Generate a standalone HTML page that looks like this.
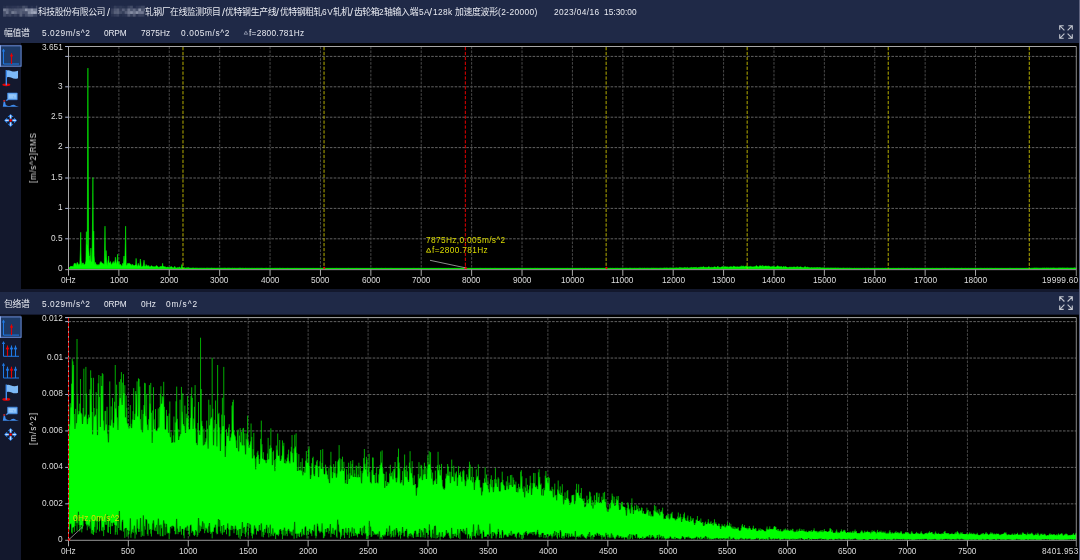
<!DOCTYPE html>
<html lang="zh"><head><meta charset="utf-8"><title>Spectrum</title>
<style>
html,body{margin:0;padding:0;background:#13182d;}
body{width:1080px;height:560px;position:relative;overflow:hidden;font-family:"Liberation Sans",sans-serif;}
.hdr{position:absolute;left:0;width:1078.7px;background:#1f2947;}
.cv{position:absolute;left:21.4px;width:1057.3px;background:#000;}
.t{position:absolute;white-space:pre;font-size:8.3px;line-height:10px;height:10px;will-change:transform;}
.c{position:absolute;overflow:visible;}
.cj{font-family:"Liberation Sans","Noto Sans CJK SC",sans-serif;color:#e9ebf2;font-size:8.9px;letter-spacing:-0.5px;}
#ov{position:absolute;left:0;top:0;}
</style></head><body>
<div class="hdr" style="top:0;height:43.1px"></div>
<div class="cv" style="top:43.3px;height:245.5px"></div>
<div class="hdr" style="top:292.2px;height:22px"></div>
<div class="cv" style="top:314.6px;height:245.4px"></div>
<div style="position:absolute;left:1078.7px;top:0;width:1.3px;height:560px;background:#5f6480"></div>
<svg id="ov" width="1080" height="560" viewBox="0 0 1080 560" fill="none">
<g filter="url(#bl)"><filter id="bl"><feGaussianBlur stdDeviation="0.55"/></filter><rect x="3.1" y="5.7" width="2.78" height="2.78" fill="#d5daea" opacity="0.04"/><rect x="3.1" y="8.43" width="2.78" height="2.78" fill="#d5daea" opacity="0.47"/><rect x="3.1" y="11.16" width="2.78" height="2.78" fill="#d5daea" opacity="0.23"/><rect x="3.1" y="13.89" width="2.78" height="2.78" fill="#d5daea" opacity="0.21"/><rect x="5.83" y="5.7" width="2.78" height="2.78" fill="#d5daea" opacity="0.08"/><rect x="5.83" y="8.43" width="2.78" height="2.78" fill="#d5daea" opacity="0.38"/><rect x="5.83" y="11.16" width="2.78" height="2.78" fill="#d5daea" opacity="0.43"/><rect x="5.83" y="13.89" width="2.78" height="2.78" fill="#d5daea" opacity="0.13"/><rect x="8.56" y="5.7" width="2.78" height="2.78" fill="#d5daea" opacity="0.05"/><rect x="8.56" y="8.43" width="2.78" height="2.78" fill="#d5daea" opacity="0.23"/><rect x="8.56" y="11.16" width="2.78" height="2.78" fill="#d5daea" opacity="0.19"/><rect x="8.56" y="13.89" width="2.78" height="2.78" fill="#d5daea" opacity="0.17"/><rect x="11.29" y="5.7" width="2.78" height="2.78" fill="#d5daea" opacity="0.07"/><rect x="11.29" y="8.43" width="2.78" height="2.78" fill="#d5daea" opacity="0.22"/><rect x="11.29" y="11.16" width="2.78" height="2.78" fill="#d5daea" opacity="0.47"/><rect x="11.29" y="13.89" width="2.78" height="2.78" fill="#d5daea" opacity="0.08"/><rect x="14.02" y="5.7" width="2.78" height="2.78" fill="#d5daea" opacity="0.07"/><rect x="14.02" y="8.43" width="2.78" height="2.78" fill="#d5daea" opacity="0.26"/><rect x="14.02" y="11.16" width="2.78" height="2.78" fill="#d5daea" opacity="0.38"/><rect x="14.02" y="13.89" width="2.78" height="2.78" fill="#d5daea" opacity="0.14"/><rect x="16.75" y="5.7" width="2.78" height="2.78" fill="#d5daea" opacity="0.1"/><rect x="16.75" y="8.43" width="2.78" height="2.78" fill="#d5daea" opacity="0.25"/><rect x="16.75" y="11.16" width="2.78" height="2.78" fill="#d5daea" opacity="0.26"/><rect x="16.75" y="13.89" width="2.78" height="2.78" fill="#d5daea" opacity="0.08"/><rect x="19.48" y="5.7" width="2.78" height="2.78" fill="#d5daea" opacity="0.08"/><rect x="19.48" y="8.43" width="2.78" height="2.78" fill="#d5daea" opacity="0.3"/><rect x="19.48" y="11.16" width="2.78" height="2.78" fill="#d5daea" opacity="0.31"/><rect x="19.48" y="13.89" width="2.78" height="2.78" fill="#d5daea" opacity="0.31"/><rect x="22.21" y="5.7" width="2.78" height="2.78" fill="#d5daea" opacity="0.22"/><rect x="22.21" y="8.43" width="2.78" height="2.78" fill="#d5daea" opacity="0.33"/><rect x="22.21" y="11.16" width="2.78" height="2.78" fill="#d5daea" opacity="0.24"/><rect x="22.21" y="13.89" width="2.78" height="2.78" fill="#d5daea" opacity="0.1"/><rect x="24.94" y="5.7" width="2.78" height="2.78" fill="#d5daea" opacity="0.16"/><rect x="24.94" y="8.43" width="2.78" height="2.78" fill="#d5daea" opacity="0.62"/><rect x="24.94" y="11.16" width="2.78" height="2.78" fill="#d5daea" opacity="0.24"/><rect x="24.94" y="13.89" width="2.78" height="2.78" fill="#d5daea" opacity="0.21"/><rect x="27.67" y="5.7" width="2.78" height="2.78" fill="#d5daea" opacity="0.02"/><rect x="27.67" y="8.43" width="2.78" height="2.78" fill="#d5daea" opacity="0.49"/><rect x="27.67" y="11.16" width="2.78" height="2.78" fill="#d5daea" opacity="0.55"/><rect x="27.67" y="13.89" width="2.78" height="2.78" fill="#d5daea" opacity="0.32"/><rect x="30.4" y="5.7" width="2.78" height="2.78" fill="#d5daea" opacity="0.06"/><rect x="30.4" y="8.43" width="2.78" height="2.78" fill="#d5daea" opacity="0.64"/><rect x="30.4" y="11.16" width="2.78" height="2.78" fill="#d5daea" opacity="0.67"/><rect x="30.4" y="13.89" width="2.78" height="2.78" fill="#d5daea" opacity="0.3"/><rect x="33.13" y="5.7" width="2.78" height="2.78" fill="#d5daea" opacity="0.02"/><rect x="33.13" y="8.43" width="2.78" height="2.78" fill="#d5daea" opacity="0.47"/><rect x="33.13" y="11.16" width="2.78" height="2.78" fill="#d5daea" opacity="0.73"/><rect x="33.13" y="13.89" width="2.78" height="2.78" fill="#d5daea" opacity="0.16"/><rect x="35.86" y="5.7" width="1.39" height="2.78" fill="#d5daea" opacity="0.19"/><rect x="35.86" y="8.43" width="1.39" height="2.78" fill="#d5daea" opacity="0.51"/><rect x="35.86" y="11.16" width="1.39" height="2.78" fill="#d5daea" opacity="0.62"/><rect x="35.86" y="13.89" width="1.39" height="2.78" fill="#d5daea" opacity="0.18"/><rect x="111" y="5.7" width="2.78" height="2.78" fill="#d5daea" opacity="0.02"/><rect x="111" y="8.43" width="2.78" height="2.78" fill="#d5daea" opacity="0.13"/><rect x="111" y="11.16" width="2.78" height="2.78" fill="#d5daea" opacity="0.14"/><rect x="111" y="13.89" width="2.78" height="2.78" fill="#d5daea" opacity="0.06"/><rect x="113.73" y="5.7" width="2.78" height="2.78" fill="#d5daea" opacity="0.11"/><rect x="113.73" y="8.43" width="2.78" height="2.78" fill="#d5daea" opacity="0.26"/><rect x="113.73" y="11.16" width="2.78" height="2.78" fill="#d5daea" opacity="0.31"/><rect x="113.73" y="13.89" width="2.78" height="2.78" fill="#d5daea" opacity="0.1"/><rect x="116.46" y="5.7" width="2.78" height="2.78" fill="#d5daea" opacity="0.07"/><rect x="116.46" y="8.43" width="2.78" height="2.78" fill="#d5daea" opacity="0.31"/><rect x="116.46" y="11.16" width="2.78" height="2.78" fill="#d5daea" opacity="0.33"/><rect x="116.46" y="13.89" width="2.78" height="2.78" fill="#d5daea" opacity="0.14"/><rect x="119.19" y="5.7" width="2.78" height="2.78" fill="#d5daea" opacity="0.09"/><rect x="119.19" y="8.43" width="2.78" height="2.78" fill="#d5daea" opacity="0.13"/><rect x="119.19" y="11.16" width="2.78" height="2.78" fill="#d5daea" opacity="0.2"/><rect x="119.19" y="13.89" width="2.78" height="2.78" fill="#d5daea" opacity="0.03"/><rect x="121.92" y="5.7" width="2.78" height="2.78" fill="#d5daea" opacity="0.06"/><rect x="121.92" y="8.43" width="2.78" height="2.78" fill="#d5daea" opacity="0.3"/><rect x="121.92" y="11.16" width="2.78" height="2.78" fill="#d5daea" opacity="0.12"/><rect x="121.92" y="13.89" width="2.78" height="2.78" fill="#d5daea" opacity="0.05"/><rect x="124.65" y="5.7" width="2.78" height="2.78" fill="#d5daea" opacity="0.04"/><rect x="124.65" y="8.43" width="2.78" height="2.78" fill="#d5daea" opacity="0.17"/><rect x="124.65" y="11.16" width="2.78" height="2.78" fill="#d5daea" opacity="0.3"/><rect x="124.65" y="13.89" width="2.78" height="2.78" fill="#d5daea" opacity="0.07"/><rect x="127.38" y="5.7" width="2.78" height="2.78" fill="#d5daea" opacity="0.13"/><rect x="127.38" y="8.43" width="2.78" height="2.78" fill="#d5daea" opacity="0.42"/><rect x="127.38" y="11.16" width="2.78" height="2.78" fill="#d5daea" opacity="0.46"/><rect x="127.38" y="13.89" width="2.78" height="2.78" fill="#d5daea" opacity="0.27"/><rect x="130.11" y="5.7" width="2.78" height="2.78" fill="#d5daea" opacity="0.19"/><rect x="130.11" y="8.43" width="2.78" height="2.78" fill="#d5daea" opacity="0.25"/><rect x="130.11" y="11.16" width="2.78" height="2.78" fill="#d5daea" opacity="0.57"/><rect x="130.11" y="13.89" width="2.78" height="2.78" fill="#d5daea" opacity="0.12"/><rect x="132.84" y="5.7" width="2.78" height="2.78" fill="#d5daea" opacity="0.02"/><rect x="132.84" y="8.43" width="2.78" height="2.78" fill="#d5daea" opacity="0.37"/><rect x="132.84" y="11.16" width="2.78" height="2.78" fill="#d5daea" opacity="0.42"/><rect x="132.84" y="13.89" width="2.78" height="2.78" fill="#d5daea" opacity="0.27"/><rect x="135.57" y="5.7" width="2.78" height="2.78" fill="#d5daea" opacity="0.07"/><rect x="135.57" y="8.43" width="2.78" height="2.78" fill="#d5daea" opacity="0.21"/><rect x="135.57" y="11.16" width="2.78" height="2.78" fill="#d5daea" opacity="0.58"/><rect x="135.57" y="13.89" width="2.78" height="2.78" fill="#d5daea" opacity="0.07"/><rect x="138.3" y="5.7" width="2.78" height="2.78" fill="#d5daea" opacity="0.1"/><rect x="138.3" y="8.43" width="2.78" height="2.78" fill="#d5daea" opacity="0.57"/><rect x="138.3" y="11.16" width="2.78" height="2.78" fill="#d5daea" opacity="0.43"/><rect x="138.3" y="13.89" width="2.78" height="2.78" fill="#d5daea" opacity="0.15"/><rect x="141.03" y="5.7" width="2.78" height="2.78" fill="#d5daea" opacity="0.16"/><rect x="141.03" y="8.43" width="2.78" height="2.78" fill="#d5daea" opacity="0.21"/><rect x="141.03" y="11.16" width="2.78" height="2.78" fill="#d5daea" opacity="0.45"/><rect x="141.03" y="13.89" width="2.78" height="2.78" fill="#d5daea" opacity="0.14"/><rect x="143.76" y="5.7" width="0.89" height="2.78" fill="#d5daea" opacity="0.2"/><rect x="143.76" y="8.43" width="0.89" height="2.78" fill="#d5daea" opacity="0.55"/><rect x="143.76" y="11.16" width="0.89" height="2.78" fill="#d5daea" opacity="0.22"/><rect x="143.76" y="13.89" width="0.89" height="2.78" fill="#d5daea" opacity="0.09"/></g>
<path d="M68.5 238.8H1076.3" stroke="#626262" stroke-dasharray="2.6 1.3"/>
<path d="M68.5 208.4H1076.3" stroke="#626262" stroke-dasharray="2.6 1.3"/>
<path d="M68.5 178H1076.3" stroke="#626262" stroke-dasharray="2.6 1.3"/>
<path d="M68.5 147.6H1076.3" stroke="#626262" stroke-dasharray="2.6 1.3"/>
<path d="M68.5 117.2H1076.3" stroke="#626262" stroke-dasharray="2.6 1.3"/>
<path d="M68.5 86.8H1076.3" stroke="#626262" stroke-dasharray="2.6 1.3"/>
<path d="M68.5 56.4H1076.3" stroke="#626262" stroke-dasharray="2.6 1.3"/>
<path d="M118.89 46.5V269.2" stroke="#484848" stroke-dasharray="2.6 1.3"/>
<path d="M169.28 46.5V269.2" stroke="#484848" stroke-dasharray="2.6 1.3"/>
<path d="M219.67 46.5V269.2" stroke="#484848" stroke-dasharray="2.6 1.3"/>
<path d="M270.06 46.5V269.2" stroke="#484848" stroke-dasharray="2.6 1.3"/>
<path d="M320.46 46.5V269.2" stroke="#484848" stroke-dasharray="2.6 1.3"/>
<path d="M370.85 46.5V269.2" stroke="#484848" stroke-dasharray="2.6 1.3"/>
<path d="M421.24 46.5V269.2" stroke="#484848" stroke-dasharray="2.6 1.3"/>
<path d="M471.63 46.5V269.2" stroke="#484848" stroke-dasharray="2.6 1.3"/>
<path d="M522.02 46.5V269.2" stroke="#484848" stroke-dasharray="2.6 1.3"/>
<path d="M572.41 46.5V269.2" stroke="#484848" stroke-dasharray="2.6 1.3"/>
<path d="M622.8 46.5V269.2" stroke="#484848" stroke-dasharray="2.6 1.3"/>
<path d="M673.19 46.5V269.2" stroke="#484848" stroke-dasharray="2.6 1.3"/>
<path d="M723.58 46.5V269.2" stroke="#484848" stroke-dasharray="2.6 1.3"/>
<path d="M773.97 46.5V269.2" stroke="#484848" stroke-dasharray="2.6 1.3"/>
<path d="M824.37 46.5V269.2" stroke="#484848" stroke-dasharray="2.6 1.3"/>
<path d="M874.76 46.5V269.2" stroke="#484848" stroke-dasharray="2.6 1.3"/>
<path d="M925.15 46.5V269.2" stroke="#484848" stroke-dasharray="2.6 1.3"/>
<path d="M975.54 46.5V269.2" stroke="#484848" stroke-dasharray="2.6 1.3"/>
<path d="M68.5 503.85H1076.3" stroke="#626262" stroke-dasharray="2.6 1.3"/>
<path d="M68.5 467.4H1076.3" stroke="#626262" stroke-dasharray="2.6 1.3"/>
<path d="M68.5 430.95H1076.3" stroke="#626262" stroke-dasharray="2.6 1.3"/>
<path d="M68.5 394.51H1076.3" stroke="#626262" stroke-dasharray="2.6 1.3"/>
<path d="M68.5 358.06H1076.3" stroke="#626262" stroke-dasharray="2.6 1.3"/>
<path d="M68.5 321.61H1076.3" stroke="#626262" stroke-dasharray="2.6 1.3"/>
<path d="M128.34 317.6V540.3" stroke="#484848" stroke-dasharray="2.6 1.3"/>
<path d="M188.27 317.6V540.3" stroke="#484848" stroke-dasharray="2.6 1.3"/>
<path d="M248.21 317.6V540.3" stroke="#484848" stroke-dasharray="2.6 1.3"/>
<path d="M308.14 317.6V540.3" stroke="#484848" stroke-dasharray="2.6 1.3"/>
<path d="M368.08 317.6V540.3" stroke="#484848" stroke-dasharray="2.6 1.3"/>
<path d="M428.01 317.6V540.3" stroke="#484848" stroke-dasharray="2.6 1.3"/>
<path d="M487.95 317.6V540.3" stroke="#484848" stroke-dasharray="2.6 1.3"/>
<path d="M547.88 317.6V540.3" stroke="#484848" stroke-dasharray="2.6 1.3"/>
<path d="M607.82 317.6V540.3" stroke="#484848" stroke-dasharray="2.6 1.3"/>
<path d="M667.75 317.6V540.3" stroke="#484848" stroke-dasharray="2.6 1.3"/>
<path d="M727.69 317.6V540.3" stroke="#484848" stroke-dasharray="2.6 1.3"/>
<path d="M787.63 317.6V540.3" stroke="#484848" stroke-dasharray="2.6 1.3"/>
<path d="M847.56 317.6V540.3" stroke="#484848" stroke-dasharray="2.6 1.3"/>
<path d="M907.5 317.6V540.3" stroke="#484848" stroke-dasharray="2.6 1.3"/>
<path d="M967.43 317.6V540.3" stroke="#484848" stroke-dasharray="2.6 1.3"/>
<path d="M68.5 268.35H1076.3" stroke="#00b800" stroke-width="0.85"/><path d="M68.5 268.8L68.84 267.6L69.52 267.8L70.21 266.8L70.89 266.1L71.57 266.5L72.25 266.1L72.94 267.2L73.62 265.5L74.3 263.2L74.98 263.5L75.1 263.3L75.67 263.7L76.35 265.8L77.03 262.5L77.1 262.6L77.71 262.8L78.4 265.5L79.08 263.9L79.76 265.3L80.44 249.3L80.7 232.3L81.13 260.5L81.81 265.5L82.49 263.2L83.17 262.8L83.86 264.7L84.54 264.8L85.22 263.7L85.9 261.1L86.4 231.7L86.59 243.2L87.27 245.9L87.9 68.1L87.95 84.7L88.63 247.6L89.32 257.5L89.4 256L90 261.5L90.68 254.5L90.9 248.1L91.36 261.8L92.05 261.4L92.73 203.6L92.9 177.6L93 192.7L93.41 249.2L93.7 231.1L94.09 255.8L94.78 264.8L95.1 262.7L95.46 262.5L96.14 265.6L96.82 264.3L97.51 265.6L98.19 264.4L98.3 264.6L98.87 265.6L99.55 264.5L100.24 262.4L100.92 261.5L101.6 262.4L102.28 263.5L102.97 263.3L103.65 264.3L104.33 264.2L105 226.2L105.01 227.2L105.5 260.2L105.7 259.7L106.1 250.5L106.38 256.9L107.06 265.6L107.74 262.7L108.43 259.2L108.6 256L109.11 263.1L109.79 263L110.4 261.7L110.47 261.5L111.16 264.4L111.84 264.5L112.52 262.7L113.2 262.3L113.3 261.5L113.89 263.5L114.57 262.8L115.25 259.7L115.4 257.2L115.93 261.4L116.62 264.8L117.3 259.7L117.6 254.2L117.98 261.1L118.66 264.5L119 261.5L119.35 263.9L120.03 264.7L120.71 264.4L121.39 265.9L122.08 266.3L122.76 263.3L123.44 264.5L124 256L124.12 258.2L124.81 263.5L125.49 234.8L125.6 226.2L126.17 264.6L126.85 265.7L127.54 263.5L128.22 263.4L128.6 263.3L128.9 263.9L129.58 263.3L130.27 264.4L130.95 264.3L131.63 265.9L132.31 264.2L133 265.6L133.68 265.3L134.36 265.7L135.04 265.1L135.73 264.9L136.1 258.4L136.41 263.7L137.09 265.9L137.77 266.2L138.3 263.3L138.46 264.5L139.14 266.1L139.82 265.8L140.4 259L140.5 260.7L141.19 266.3L141.87 266.9L142.55 266.3L143.23 265.5L143.92 261.4L144 260.2L144.6 265.9L145.28 266.6L145.96 265.3L146.1 264.5L146.65 266L147.33 265.6L148.01 266.4L148.69 265.4L149.38 266.7L150.06 266.9L150.74 266.6L151.1 266.1L151.42 265.6L152.11 266.3L152.79 266.7L153.47 266.7L154.15 266.5L154.84 266.9L155.52 266.7L156.2 265.6L156.88 265.9L157.57 266.3L158.25 267.5L158.93 266.9L159.61 267.2L160.3 266.2L160.98 267.3L161.66 266.2L162.34 265.6L162.6 263.3L163.03 267.2L163.71 266.2L164.39 267.1L165.07 266.5L165.76 267.2L166.44 267.6L167.12 267.1L167.8 267.3L168.49 267.4L169 266.9L169.17 267.3L169.85 267.8L170.53 266.8L171.22 266.7L171.9 266.7L172.58 267.7L173.26 268L173.95 267.5L174.63 266.5L174.7 266.3L175.31 267.5L175.99 268.1L176.68 267.9L177.36 267.5L178.04 268.1L178.72 267.4L179.41 266.9L180.09 268L180.77 268.2L181.45 267.1L181.9 264.5L182.14 265.9L182.82 267.9L183.5 267.9L184.18 267.5L184.87 268L185.55 268.2L186.23 267.8L186.91 268.1L187.6 267.8L188.28 267.5L188.96 268.1L189.64 268.1L190.33 268.3L191.01 268.1L191.69 268.3L192.37 268.1L193.06 267.9L193.74 268.1L194.42 268.3L195.1 268.3L195.79 268.1L196.47 268.2L197.15 268.2L197.83 268.3L198.52 268.4L199.2 268.3L199.88 268.3L200.56 268.3L201.25 268.2L201.93 268.4L202.61 268.3L203.29 268.3L203.98 268.3L204.66 268.3L205.34 268.4L206.02 268.3L206.71 268.2L207.39 268.2L208.07 268.2L208.75 268.3L209.44 268.3L210.12 268.3L210.8 268.3L211.48 268.1L212.17 268.3L212.85 268.3L213.53 268.3L214.21 268.3L214.9 268.3L215.58 268.4L216.26 268.4L216.94 268.3L217.63 268.3L218.31 268.2L218.99 268.4L219.67 268.4L220.36 268.3L221.04 268.3L221.72 268.3L222.4 268.3L223.09 268.4L223.77 268.2L224.45 268.2L225.13 268.2L225.82 268.3L226.5 268.4L227.18 268.3L227.86 268.2L228.55 268.2L229.23 268.2L229.91 268.3L230.59 268.4L231.28 268.4L231.96 268.4L232.64 268.2L233.32 268.4L234.01 268.4L234.69 268.3L235.37 268.4L236.05 268.4L236.74 268.4L237.42 268.4L238.1 268.4L238.78 268.3L239.47 268.2L240.15 268.3L240.83 268.2L241.51 268.4L242.2 268.4L242.88 268.2L243.56 268.4L244.24 268.5L244.93 268.4L245.61 268.3L246.29 268.4L246.97 268.4L247.66 268.4L248.34 268.4L249.02 268.4L249.7 268.4L250.39 268.5L251.07 268.4L251.75 268.4L252.43 268.4L253.12 268.4L253.8 268.5L254.48 268.4L255.16 268.5L255.85 268.5L256.53 268.4L257.21 268.4L257.89 268.4L258.58 268.4L259.26 268.4L259.94 268.4L260.62 268.4L261.31 268.3L261.99 268.5L262.67 268.4L263.35 268.5L264.04 268.4L264.72 268.5L265.4 268.4L266.08 268.4L266.77 268.3L267.45 268.5L268.13 268.5L268.81 268.3L269.5 268.4L270.18 268.4L270.86 268.5L271.54 268.5L272.23 268.4L272.91 268.5L273.59 268.5L274.27 268.4L274.96 268.4L275.64 268.4L276.32 268.4L277 268.5L277.69 268.4L278.37 268.5L279.05 268.4L279.73 268.3L280.42 268.4L281.1 268.5L281.78 268.5L282.46 268.4L283.15 268.6L283.83 268.4L284.51 268.5L285.19 268.5L285.88 268.5L286.56 268.5L287.24 268.5L287.92 268.3L288.61 268.5L289.29 268.5L289.97 268.5L290.65 268.5L291.34 268.5L292.02 268.5L292.7 268.5L293.38 268.5L294.07 268.5L294.75 268.4L295.43 268.5L296.11 268.4L296.8 268.5L297.48 268.5L298.16 268.6L298.84 268.5L299.53 268.5L300.21 268.5L300.89 268.6L301.57 268.6L302.26 268.5L302.94 268.5L303.62 268.5L304.3 268.5L304.99 268.4L305.67 268.5L306.35 268.5L307.03 268.6L307.72 268.6L308.4 268.5L309.08 268.6L309.76 268.5L310.45 268.5L311.13 268.5L311.81 268.5L312.49 268.5L313.18 268.5L313.86 268.4L314.54 268.5L315.22 268.5L315.91 268.5L316.59 268.5L317.27 268.6L317.95 268.5L318.64 268.6L319.32 268.5L320 268.4L320.68 268.4L321.37 268.5L322.05 268.5L322.73 268.5L323.41 268.5L324.1 268.6L324.78 268.6L325.46 268.6L326.14 268.6L326.83 268.4L327.51 268.5L328.19 268.6L328.87 268.5L329.56 268.5L330.24 268.6L330.92 268.6L331.6 268.5L332.29 268.5L332.97 268.4L333.65 268.6L334.33 268.5L335.02 268.4L335.7 268.5L336.38 268.4L337.06 268.5L337.75 268.5L338.43 268.5L339.11 268.4L339.79 268.5L340.48 268.5L341.16 268.5L341.84 268.6L342.52 268.5L343.21 268.5L343.89 268.5L344.57 268.5L345.25 268.5L345.94 268.6L346.62 268.6L347.3 268.5L347.98 268.5L348.67 268.4L349.35 268.5L350.03 268.5L350.71 268.6L351.4 268.5L352.08 268.5L352.76 268.5L353.44 268.6L354.13 268.6L354.81 268.5L355.49 268.5L356.17 268.4L356.86 268.5L357.54 268.5L358.22 268.6L358.9 268.5L359.59 268.6L360.27 268.5L360.95 268.5L361.63 268.5L362.32 268.5L363 268.5L363.68 268.5L364.36 268.6L365.05 268.5L365.73 268.5L366.41 268.5L367.09 268.5L367.78 268.5L368.46 268.5L369.14 268.5L369.82 268.5L370.51 268.5L371.19 268.5L371.87 268.6L372.55 268.4L373.24 268.6L373.92 268.6L374.6 268.5L375.28 268.6L375.97 268.5L376.65 268.4L377.33 268.5L378.01 268.5L378.7 268.5L379.38 268.6L380.06 268.5L380.74 268.5L381.43 268.4L382.11 268.6L382.79 268.5L383.47 268.5L384.16 268.5L384.84 268.5L385.52 268.4L386.2 268.5L386.89 268.5L387.57 268.5L388.25 268.6L388.93 268.4L389.62 268.5L390.3 268.4L390.98 268.6L391.66 268.4L392.35 268.5L393.03 268.6L393.71 268.6L394.39 268.5L395.08 268.5L395.76 268.5L396.44 268.5L397.12 268.5L397.81 268.5L398.49 268.5L399.17 268.5L399.85 268.5L400.54 268.6L401.22 268.4L401.9 268.6L402.58 268.5L403.27 268.5L403.95 268.5L404.63 268.5L405.31 268.6L406 268.5L406.68 268.5L407.36 268.5L408.04 268.5L408.73 268.5L409.41 268.5L410.09 268.5L410.77 268.6L411.46 268.5L412.14 268.5L412.82 268.5L413.5 268.4L414.19 268.4L414.87 268.5L415.55 268.5L416.23 268.5L416.92 268.5L417.6 268.5L418.28 268.4L418.96 268.5L419.65 268.5L420.33 268.5L421.01 268.4L421.69 268.6L422.38 268.6L423.06 268.5L423.74 268.4L424.42 268.5L425.11 268.5L425.79 268.5L426.47 268.6L427.15 268.5L427.84 268.5L428.52 268.6L429.2 268.5L429.88 268.5L430.57 268.5L431.25 268.4L431.93 268.6L432.61 268.5L433.3 268.5L433.98 268.4L434.66 268.5L435.34 268.5L436.03 268.5L436.71 268.6L437.39 268.5L438.07 268.5L438.76 268.4L439.44 268.6L440.12 268.6L440.8 268.4L441.49 268.5L442.17 268.5L442.85 268.6L443.53 268.5L444.22 268.5L444.9 268.5L445.58 268.5L446.26 268.6L446.95 268.6L447.63 268.5L448.31 268.4L448.99 268.5L449.68 268.5L450.36 268.5L451.04 268.5L451.72 268.5L452.41 268.5L453.09 268.5L453.77 268.6L454.45 268.4L455.14 268.5L455.82 268.5L456.5 268.5L457.18 268.4L457.87 268.6L458.55 268.4L459.23 268.5L459.91 268.6L460.6 268.5L461.28 268.4L461.96 268.5L462.64 268.5L463.33 268.4L464.01 268.5L464.69 268.5L465.37 268.6L466.06 268.6L466.74 268.5L467.42 268.5L468.1 268.5L468.79 268.6L469.47 268.5L470.15 268.5L470.83 268.5L471.52 268.5L472.2 268.5L472.88 268.5L473.56 268.5L474.25 268.6L474.93 268.6L475.61 268.6L476.29 268.5L476.98 268.5L477.66 268.5L478.34 268.5L479.02 268.6L479.71 268.4L480.39 268.4L481.07 268.5L481.75 268.5L482.44 268.6L483.12 268.5L483.8 268.6L484.48 268.5L485.17 268.4L485.85 268.5L486.53 268.5L487.21 268.6L487.9 268.6L488.58 268.5L489.26 268.6L489.94 268.5L490.63 268.4L491.31 268.6L491.99 268.5L492.67 268.5L493.36 268.5L494.04 268.4L494.72 268.4L495.4 268.4L496.09 268.6L496.77 268.5L497.45 268.5L498.13 268.5L498.82 268.5L499.5 268.5L500.18 268.5L500.86 268.6L501.55 268.5L502.23 268.6L502.91 268.5L503.59 268.5L504.28 268.4L504.96 268.6L505.64 268.5L506.32 268.6L507.01 268.5L507.69 268.6L508.37 268.5L509.05 268.5L509.74 268.5L510.42 268.6L511.1 268.6L511.78 268.6L512.47 268.5L513.15 268.5L513.83 268.5L514.51 268.5L515.2 268.5L515.88 268.5L516.56 268.6L517.24 268.6L517.93 268.6L518.61 268.4L519.29 268.6L519.97 268.5L520.66 268.5L521.34 268.5L522.02 268.5L522.7 268.5L523.39 268.5L524.07 268.5L524.75 268.6L525.43 268.6L526.12 268.5L526.8 268.5L527.48 268.5L528.16 268.5L528.85 268.5L529.53 268.6L530.21 268.4L530.89 268.5L531.58 268.5L532.26 268.5L532.94 268.5L533.62 268.5L534.31 268.4L534.99 268.5L535.67 268.4L536.35 268.5L537.04 268.5L537.72 268.4L538.4 268.5L539.08 268.5L539.77 268.5L540.45 268.6L541.13 268.5L541.81 268.5L542.5 268.5L543.18 268.5L543.86 268.5L544.54 268.5L545.23 268.5L545.91 268.5L546.59 268.5L547.27 268.6L547.96 268.5L548.64 268.5L549.32 268.5L550 268.5L550.69 268.5L551.37 268.5L552.05 268.5L552.73 268.5L553.42 268.5L554.1 268.5L554.78 268.5L555.46 268.5L556.15 268.5L556.83 268.5L557.51 268.6L558.19 268.5L558.88 268.5L559.56 268.6L560.24 268.5L560.92 268.5L561.61 268.5L562.29 268.6L562.97 268.5L563.65 268.5L564.34 268.5L565.02 268.5L565.7 268.5L566.38 268.6L567.07 268.6L567.75 268.4L568.43 268.6L569.11 268.5L569.8 268.6L570.48 268.5L571.16 268.5L571.84 268.5L572.53 268.5L573.21 268.5L573.89 268.5L574.57 268.6L575.26 268.5L575.94 268.6L576.62 268.5L577.3 268.6L577.99 268.6L578.67 268.5L579.35 268.5L580.03 268.5L580.72 268.4L581.4 268.5L582.08 268.5L582.76 268.4L583.45 268.6L584.13 268.5L584.81 268.6L585.49 268.4L586.18 268.6L586.86 268.5L587.54 268.6L588.22 268.4L588.91 268.5L589.59 268.6L590.27 268.5L590.95 268.5L591.64 268.5L592.32 268.5L593 268.5L593.68 268.5L594.37 268.6L595.05 268.5L595.73 268.5L596.41 268.5L597.1 268.5L597.78 268.5L598.46 268.6L599.14 268.4L599.83 268.5L600.51 268.6L601.19 268.5L601.87 268.5L602.56 268.5L603.24 268.5L603.92 268.4L604.6 268.5L605.29 268.5L605.97 268.4L606.65 268.4L607.33 268.5L608.02 268.5L608.7 268.5L609.38 268.5L610.06 268.4L610.75 268.4L611.43 268.5L612.11 268.4L612.79 268.4L613.48 268.5L614.16 268.5L614.84 268.5L615.52 268.4L616.21 268.4L616.89 268.5L617.57 268.4L618.25 268.5L618.94 268.5L619.62 268.5L620.3 268.4L620.98 268.4L621.67 268.4L622.35 268.4L623.03 268.5L623.71 268.4L624.4 268.4L625.08 268.3L625.76 268.3L626.44 268.3L627.13 268.4L627.81 268.4L628.49 268.5L629.17 268.4L629.86 268.1L630.54 268.3L631.22 268.4L631.9 268.4L632.59 268.4L633.27 268.4L633.95 268.5L634.63 268.3L635.32 268.4L636 268.4L636.68 268.4L637.36 268.5L638.05 268.3L638.73 268.4L639.41 268.2L640.09 268.2L640.78 268.3L641.46 268.4L642.14 268.4L642.82 268.2L643.51 268.4L644.19 268.3L644.87 268.2L645.55 268.4L646.24 268.3L646.92 268.4L647.6 268.3L648.28 268.4L648.97 268.2L649.65 268.4L650.33 268.4L651.01 268.3L651.7 268.2L652.38 268.3L653.06 268.3L653.74 268.2L654.43 268.3L655.11 268.3L655.79 268.3L656.47 268.3L657.16 268.4L657.84 268.3L658.52 268.4L659.2 268.3L659.89 268.3L660.57 268.2L661.25 268.2L661.93 268.4L662.62 268.3L663.3 268.2L663.98 268.1L664.66 267.9L665.35 268.2L666.03 267.8L666.71 268.1L667.39 268.1L668.08 268.2L668.76 268.3L669.44 268L670.12 268L670.81 267.9L671.49 268.1L672.17 268.1L672.85 268L673.54 268.2L674.22 268.1L674.9 268L675.58 267.9L676.27 267.8L676.95 268L677.63 268L678.31 268L679 267.9L679.68 267.4L680.36 267.8L681.04 267.6L681.73 268L682.41 267.9L683.09 267.7L683.77 268L684.46 267.6L685.14 267.7L685.82 267.7L686.5 267.9L687.19 267.3L687.87 268L688.55 268L689.23 268L689.92 267.7L690.6 267.7L691.28 267.3L691.96 267.7L692.65 267.7L693.33 267.5L694.01 267.6L694.69 267.5L695.38 267.5L696.06 267.4L696.74 267.4L697.42 267.9L698.11 267.6L698.79 267.6L699.47 267.4L700.15 267.2L700.84 267.2L701.52 267.2L702.2 267.1L702.88 267.5L703.57 266.5L704.25 267.8L704.93 267.1L705.61 267.4L706.3 267.4L706.98 267.2L707.66 267.5L708.34 267L709.03 266.5L709.71 267.4L710.39 267.6L711.07 267.4L711.76 267.2L712.44 267.5L713.12 267.2L713.8 267.3L714.49 266.8L715.17 267L715.85 267.3L716.53 267.5L717.22 267.2L717.9 266.1L718.58 267.5L719.26 267.5L719.95 267.3L720.63 267.4L721.31 267L721.99 266.9L722.68 266.6L723.36 267.4L724.04 266.6L724.72 266.9L725.41 266.7L726.09 266.7L726.77 267.1L727.45 266.7L728.14 267.4L728.82 266.9L729.5 266.9L730.18 266.7L730.87 266.7L731.55 266.8L732.23 267L732.91 267.2L733.6 266L734.28 266.4L734.96 266.7L735.64 266.9L736.33 266.8L737.01 267.2L737.69 266.5L738.37 267L739.06 266.9L739.74 266.8L740.42 266.4L741.1 266.9L741.79 265.7L742.47 266.4L743.15 266.2L743.83 266.2L744.52 266.8L745.2 266.5L745.88 266.1L746.56 265.9L747.25 266.7L747.93 266.2L748.61 266.9L749.29 266.7L749.98 266.4L750.66 266.4L751.34 266.7L752.02 266.7L752.71 266.9L753.39 267.1L754.07 266.3L754.75 267L755.44 266.4L756.12 265.8L756.8 265.7L757.48 266.5L758.17 267.1L758.85 266.7L759.53 265.8L760.21 265.7L760.9 266.1L761.58 266.5L762.26 265.3L762.94 267L763.63 265.9L764.31 266.5L764.99 266L765 266L765.67 266L766.36 266.1L767.04 266.6L767.72 265.9L768.4 266.2L769.09 265.9L769.77 266.6L770.45 266.9L771.13 266.4L771.82 266.9L772.5 266.4L773.18 266.3L773.86 266.8L774.55 266.8L775.23 266.9L775.91 267.1L776.59 266.8L777.28 266L777.96 265.7L778.64 266.4L779.32 266.9L780.01 266.3L780.69 266.9L781.37 266.6L782.05 266.7L782.74 267.4L783.42 266.6L784.1 266.4L784.78 267.3L785.47 266.4L786.15 267.1L786.83 267.1L787.51 267.5L788.2 267.4L788.88 267.6L789.56 266.9L790.24 267L790.93 267.6L791.61 266.9L792.29 267.3L792.97 267.3L793.66 266.9L794.34 266.9L795.02 267.3L795.7 267.3L796.39 266.9L797.07 267.5L797.75 266.4L798.43 267.4L799.12 267.3L799.8 267.1L800.48 266.8L801.16 267.2L801.85 267.3L802.53 267.5L803.21 267.7L803.89 267.5L804.58 266.9L805.26 266.5L805.94 267.4L806.62 267.5L807.31 267.1L807.99 267.4L808.67 267.5L809.35 267.7L810.04 267.6L810.72 267.9L811.4 267.5L812.08 267.5L812.77 267.9L813.45 267.7L814.13 267.6L814.81 267.8L815.5 267.7L816.18 267.8L816.86 267.6L817.54 267.6L818.23 267.7L818.91 267.7L819.59 267.6L820.27 267.8L820.96 267.8L821.64 268L822.32 268.1L823 267.6L823.69 268L824.37 268L825.05 268.1L825.73 268.2L826.42 268.1L827.1 268L827.78 268L828.46 268L829.15 268.2L829.83 268.1L830.51 268L831.19 268.1L831.88 267.9L832.56 268.1L833.24 268.1L833.92 268L834.61 268.1L835.29 268L835.97 267.9L836.65 268.2L837.34 268L838.02 268.3L838.7 268L839.38 268.3L840.07 268.1L840.75 268.3L841.43 268.3L842.11 268.3L842.8 268.2L843.48 268.1L844.16 268.2L844.84 268.3L845.53 268.3L846.21 268.3L846.89 268.2L847.57 268.2L848.26 268.4L848.94 268.1L849.62 268.2L850.3 268.4L850.99 268.3L851.67 268.4L852.35 268.5L853.03 268.4L853.72 268.5L854.4 268.3L855.08 268.5L855.76 268.5L856.45 268.4L857.13 268.4L857.81 268.5L858.49 268.4L859.18 268.4L859.86 268.5L860.54 268.4L861.22 268.5L861.91 268.4L862.59 268.4L863.27 268.4L863.95 268.4L864.64 268.5L865.32 268.4L866 268.4L866.68 268.4L867.37 268.4L868.05 268.4L868.73 268.3L869.41 268.5L870.1 268.5L870.78 268.5L871.46 268.5L872.14 268.4L872.83 268.5L873.51 268.4L874.19 268.4L874.87 268.4L875.56 268.4L876.24 268.4L876.92 268.4L877.6 268.5L878.29 268.4L878.97 268.5L879.65 268.5L880.33 268.5L881.02 268.4L881.7 268.5L882.38 268.4L883.06 268.5L883.75 268.6L884.43 268.5L885.11 268.3L885.79 268.4L886.48 268.5L887.16 268.5L887.84 268.5L888.52 268.5L889.21 268.5L889.89 268.4L890.57 268.5L891.25 268.5L891.94 268.5L892.62 268.5L893.3 268.4L893.98 268.6L894.67 268.5L895.35 268.5L896.03 268.5L896.71 268.6L897.4 268.5L898.08 268.5L898.76 268.3L899.44 268.5L900.13 268.5L900.81 268.5L901.49 268.4L902.17 268.5L902.86 268.4L903.54 268.4L904.22 268.5L904.9 268.5L905.59 268.5L906.27 268.5L906.95 268.4L907.63 268.4L908.32 268.6L909 268.5L909.68 268.5L910.36 268.4L911.05 268.4L911.73 268.4L912.41 268.5L913.09 268.5L913.78 268.5L914.46 268.4L915.14 268.4L915.82 268.4L916.51 268.5L917.19 268.4L917.87 268.6L918.55 268.5L919.24 268.4L919.92 268.5L920.6 268.5L921.28 268.4L921.97 268.6L922.65 268.5L923.33 268.5L924.01 268.5L924.7 268.5L925.38 268.5L926.06 268.5L926.74 268.4L927.43 268.4L928.11 268.5L928.79 268.5L929.47 268.5L930.16 268.5L930.84 268.5L931.52 268.5L932.2 268.4L932.89 268.4L933.57 268.5L934.25 268.5L934.93 268.5L935.62 268.5L936.3 268.4L936.98 268.5L937.66 268.5L938.35 268.5L939.03 268.6L939.71 268.6L940.39 268.5L941.08 268.6L941.76 268.5L942.44 268.4L943.12 268.5L943.81 268.5L944.49 268.4L945.17 268.3L945.85 268.5L946.54 268.5L947.22 268.5L947.9 268.5L948.58 268.5L949.27 268.4L949.95 268.5L950.63 268.4L951.31 268.4L952 268.5L952.68 268.4L953.36 268.4L954.04 268.5L954.73 268.5L955.41 268.5L956.09 268.5L956.77 268.5L957.46 268.5L958.14 268.4L958.82 268.5L959.5 268.6L960.19 268.5L960.87 268.5L961.55 268.3L962.23 268.6L962.92 268.4L963.6 268.5L964.28 268.5L964.96 268.4L965.65 268.4L966.33 268.5L967.01 268.5L967.69 268.5L968.38 268.4L969.06 268.5L969.74 268.6L970.42 268.6L971.11 268.5L971.79 268.4L972.47 268.5L973.15 268.5L973.84 268.4L974.52 268.4L975.2 268.5L975.88 268.6L976.57 268.6L977.25 268.5L977.93 268.5L978.61 268.5L979.3 268.5L979.98 268.4L980.66 268.4L981.34 268.4L982.03 268.5L982.71 268.5L983.39 268.6L984.07 268.4L984.76 268.4L985.44 268.5L986.12 268.5L986.8 268.4L987.49 268.4L988.17 268.6L988.85 268.5L989.53 268.4L990.22 268.4L990.9 268.5L991.58 268.4L992.26 268.5L992.95 268.5L993.63 268.6L994.31 268.5L994.99 268.5L995.68 268.4L996.36 268.5L997.04 268.4L997.72 268.5L998.41 268.5L999.09 268.5L999.77 268.5L1000.45 268.5L1001.14 268.4L1001.82 268.5L1002.5 268.6L1003.18 268.5L1003.87 268.5L1004.55 268.5L1005.23 268.5L1005.91 268.6L1006.6 268.6L1007.28 268.5L1007.96 268.5L1008.64 268.5L1009.33 268.4L1010.01 268.5L1010.69 268.4L1011.37 268.5L1012.06 268.6L1012.74 268.5L1013.42 268.5L1014.1 268.5L1014.79 268.5L1015.47 268.6L1016.15 268.4L1016.83 268.5L1017.52 268.5L1018.2 268.5L1018.88 268.5L1019.56 268.6L1020.25 268.5L1020.93 268.5L1021.61 268.6L1022.29 268.5L1022.98 268.6L1023.66 268.5L1024.34 268.5L1025.02 268.6L1025.71 268.5L1026.39 268.4L1027.07 268.5L1027.75 268.5L1028.44 268.3L1029.12 268.3L1029.8 268.4L1030.48 268.5L1031.17 268.3L1031.85 268.4L1032.53 268.3L1033.21 268.3L1033.9 268L1034.58 268L1035.26 268L1035.94 268.2L1036.63 268L1037.31 268.1L1037.99 268.3L1038.67 268.2L1039.36 268.3L1040.04 268.1L1040.72 268.3L1041.4 268.3L1042.09 268L1042.77 268.1L1043.45 268.1L1044.13 268.1L1044.82 267.9L1045.5 268.2L1046.18 267.9L1046.86 268L1047.55 268.1L1048.23 268L1048.91 268.1L1049.59 268.2L1050.28 268L1050.96 268.2L1051.64 268.1L1052.32 268.1L1053.01 268.1L1053.69 267.9L1054.37 268.1L1055.05 268L1055.74 268.3L1056.42 268.2L1057.1 268.2L1057.78 268.2L1058.47 268L1059.15 268.1L1059.83 267.9L1060.51 268L1061.2 268.1L1061.88 268L1062.56 267.9L1063.24 267.9L1063.93 268.2L1064.61 268L1065.29 268.1L1065.97 268.2L1066.66 268L1067.34 267.9L1068.02 268.2L1068.7 268.1L1069.39 268.2L1070.07 268.1L1070.75 268.1L1071.43 268.1L1072.12 268L1072.8 268.3L1073.48 268.1L1074.16 267.7L1074.85 267.9L1075.53 268L1076.21 268L1076.3 268.8Z" fill="#00ff00" stroke="#00ff00" stroke-width="0.55" stroke-linejoin="round"/>
<path d="M68.84 436L69.52 436L70.21 424.1L70.89 407.5L71.57 407.5L72.25 383.7L72.94 365L73.62 414L74.3 428.9L74.98 428.9L75.67 428.9L76.35 423.2L77.03 423.2L77.71 414.4L78.4 414.4L79.08 414.4L79.76 410.9L80.44 412.9L81.13 414.3L81.81 424.1L82.49 424.1L83.17 424.1L83.86 416.7L84.54 416.7L85.22 416.7L85.9 414.5L86.59 424.3L87.27 424.3L87.95 424.3L88.63 418.7L89.32 417.4L90 417.4L90.68 389.3L91.36 412L92.05 434.5L92.73 434.5L93.41 434.5L94.09 416.5L94.78 416.5L95.46 416.5L96.14 414.7L96.82 435.2L97.51 435.2L98.19 435.2L98.87 396.9L99.55 426.9L100.24 426.9L100.92 426.9L101.6 385.9L102.28 385.9L102.97 420.6L103.65 430.7L104.33 430.7L105.01 430.7L105.7 424.5L106.38 424.5L107.06 433.6L107.74 442.6L108.43 442.6L109.11 442.6L109.79 425.8L110.47 425.8L111.16 425.8L111.84 419.6L112.52 427.8L113.2 427.8L113.89 427.8L114.57 422.8L115.25 408.4L115.93 408.4L116.62 417.4L117.3 430.1L117.98 430.1L118.66 430.1L119.35 405.9L120.03 397.9L120.71 397.9L121.39 405.1L122.08 405.1L122.76 405.1L123.44 393.3L124.12 393.3L124.81 417.5L125.49 417.5L126.17 417.5L126.85 423.3L127.54 424.4L128.22 428.7L128.9 428.7L129.58 428.7L130.27 426L130.95 428.2L131.63 428.2L132.31 428.2L133 419.4L133.68 420L134.36 420L135.04 420L135.73 413.8L136.41 394.6L137.09 416.6L137.77 416.6L138.46 416.6L139.14 386.6L139.82 419.1L140.5 429.7L141.19 429.7L141.87 432.4L142.55 432.4L143.23 432.4L143.92 414L144.6 405.1L145.28 416.2L145.96 416.2L146.65 424.6L147.33 430.2L148.01 430.2L148.69 430.2L149.38 419.2L150.06 403.5L150.74 412.8L151.42 442.9L152.11 442.9L152.79 442.9L153.47 419.3L154.15 429.1L154.84 429.1L155.52 430.8L156.2 431.2L156.88 431.2L157.57 431.2L158.25 428.5L158.93 427.4L159.61 427.4L160.3 407.1L160.98 403.8L161.66 403.8L162.34 403.8L163.03 397.1L163.71 406.8L164.39 429.3L165.07 429.7L165.76 429.7L166.44 429.7L167.12 416L167.8 432.8L168.49 432.8L169.17 432.8L169.85 437.3L170.53 437.3L171.22 443.1L171.9 443.1L172.58 443.1L173.26 442.3L173.95 442.5L174.63 442.5L175.31 442.5L175.99 422.5L176.68 418.8L177.36 428.9L178.04 440.1L178.72 440.1L179.41 440.1L180.09 436.3L180.77 434.1L181.45 434.1L182.14 411.7L182.82 424.1L183.5 426.1L184.18 426.1L184.87 433L185.55 433L186.23 433L186.91 417.9L187.6 417.9L188.28 429.5L188.96 429.5L189.64 429.5L190.33 429.5L191.01 417.9L191.69 397.9L192.37 429L193.06 429L193.74 429L194.42 418.5L195.1 428.5L195.79 442.9L196.47 445.2L197.15 445.2L197.83 445.2L198.52 431L199.2 434.9L199.88 434.9L200.56 434.9L201.25 420.8L201.93 426.1L202.61 445.6L203.29 445.6L203.98 445.6L204.66 444.6L205.34 444.6L206.02 441.8L206.71 438.2L207.39 448.8L208.07 448.8L208.75 448.8L209.44 425.4L210.12 425.4L210.8 418.7L211.48 418.7L212.17 417.2L212.85 445.4L213.53 445.4L214.21 445.4L214.9 428.4L215.58 423.9L216.26 446.5L216.94 446.5L217.63 446.5L218.31 414L218.99 427.4L219.67 451.1L220.36 451.1L221.04 451.1L221.72 433.7L222.4 426.3L223.09 426.3L223.77 426.3L224.45 457L225.13 457L225.82 457L226.5 446.1L227.18 436.1L227.86 436.1L228.55 436.1L229.23 441L229.91 441L230.59 441L231.28 437.4L231.96 433.5L232.64 405.5L233.32 430.5L234.01 434.7L234.69 436.4L235.37 440.4L236.05 448L236.74 448L237.42 448L238.1 451.5L238.78 451.5L239.47 451.5L240.15 442.2L240.83 442.2L241.51 445.5L242.2 445.5L242.88 445.5L243.56 445.4L244.24 445.4L244.93 454.6L245.61 454.6L246.29 454.6L246.97 439.2L247.66 440.8L248.34 447.9L249.02 447.9L249.7 447.9L250.39 444.8L251.07 441.3L251.75 458.6L252.43 458.6L253.12 458.6L253.8 455.4L254.48 458.5L255.16 469.6L255.85 469.6L256.53 469.6L257.21 456.9L257.89 454.8L258.58 463.9L259.26 463.9L259.94 463.9L260.62 458.9L261.31 444.2L261.99 458.7L262.67 458.7L263.35 459.7L264.04 459.8L264.72 460.3L265.4 463.2L266.08 463.2L266.77 463.2L267.45 460L268.13 459.4L268.81 459.4L269.5 459.4L270.18 448.8L270.86 447.7L271.54 465.3L272.23 465.3L272.91 465.3L273.59 460.1L274.27 471.2L274.96 471.2L275.64 471.2L276.32 458.9L277 449.7L277.69 455.9L278.37 455.9L279.05 455.9L279.73 461.1L280.42 461.1L281.1 461.1L281.78 459.3L282.46 455.6L283.15 445.7L283.83 463.2L284.51 463.2L285.19 463.6L285.88 463.6L286.56 463.6L287.24 461.2L287.92 457.6L288.61 461.3L289.29 463.5L289.97 463.5L290.65 463.5L291.34 451.5L292.02 453.1L292.7 462.4L293.38 462.4L294.07 462.4L294.75 448.5L295.43 446.5L296.11 452.9L296.8 471.1L297.48 471.1L298.16 471.1L298.84 470.6L299.53 470.6L300.21 470.6L300.89 470.8L301.57 470.8L302.26 475.5L302.94 475.5L303.62 475.5L304.3 472.8L304.99 472.8L305.67 472.8L306.35 460.7L307.03 463L307.72 463L308.4 463L309.08 466L309.76 479L310.45 479L311.13 479L311.81 474.9L312.49 463.2L313.18 474.2L313.86 476.3L314.54 476.3L315.22 476.3L315.91 465.6L316.59 465.6L317.27 466.2L317.95 477.2L318.64 477.2L319.32 477.2L320 465.9L320.68 468.9L321.37 468.9L322.05 468.9L322.73 468.2L323.41 473.9L324.1 474.6L324.78 474.6L325.46 474.6L326.14 470.7L326.83 474.7L327.51 479.1L328.19 479.1L328.87 483.3L329.56 483.3L330.24 483.3L330.92 466.8L331.6 478.3L332.29 478.3L332.97 478.3L333.65 472.1L334.33 473.2L335.02 473.2L335.7 477.8L336.38 477.8L337.06 477.8L337.75 473.5L338.43 461.5L339.11 459.6L339.79 471.5L340.48 471.5L341.16 471.5L341.84 469.4L342.52 470.9L343.21 470.9L343.89 470.9L344.57 483.4L345.25 483.4L345.94 483.4L346.62 484L347.3 484L347.98 484L348.67 478.9L349.35 478.9L350.03 478.9L350.71 475.5L351.4 475.5L352.08 475.5L352.76 476.9L353.44 476.9L354.13 476.9L354.81 477L355.49 477L356.17 477L356.86 477.4L357.54 477.4L358.22 477.4L358.9 477.3L359.59 477.3L360.27 477.3L360.95 483.4L361.63 483.4L362.32 483.4L363 473.2L363.68 470.6L364.36 463.7L365.05 469.5L365.73 469.5L366.41 469.5L367.09 476.6L367.78 476.6L368.46 476.6L369.14 471.9L369.82 482.2L370.51 483.6L371.19 483.6L371.87 483.6L372.55 470.1L373.24 474.9L373.92 474.9L374.6 483.2L375.28 483.2L375.97 483.2L376.65 482.4L377.33 483.5L378.01 483.5L378.7 483.5L379.38 474.4L380.06 469L380.74 465L381.43 462.6L382.11 467.9L382.79 473.6L383.47 474L384.16 487.9L384.84 487.9L385.52 487.9L386.2 486.1L386.89 486.1L387.57 486.1L388.25 483.6L388.93 483.6L389.62 483.6L390.3 476.3L390.98 476.3L391.66 476.3L392.35 479.6L393.03 479.6L393.71 479.6L394.39 469.2L395.08 477.9L395.76 482.4L396.44 482.4L397.12 482.4L397.81 477.7L398.49 462.5L399.17 468.6L399.85 483.6L400.54 483.6L401.22 483.6L401.9 482.1L402.58 485.6L403.27 485.6L403.95 485.6L404.63 469.6L405.31 476.9L406 476.9L406.68 476.9L407.36 479.8L408.04 482L408.73 482L409.41 482L410.09 467.9L410.77 473.3L411.46 473.3L412.14 477.8L412.82 485.3L413.5 485.3L414.19 485.3L414.87 484.6L415.55 495.8L416.23 495.8L416.92 495.8L417.6 488.1L418.28 487.3L418.96 478.6L419.65 478.6L420.33 478.6L421.01 476.3L421.69 480.2L422.38 480.2L423.06 480.2L423.74 474.5L424.42 474.5L425.11 474L425.79 479L426.47 479L427.15 479L427.84 468.3L428.52 464.5L429.2 464.5L429.88 464.4L430.57 469.6L431.25 478.7L431.93 478.7L432.61 484.8L433.3 484.8L433.98 484.8L434.66 481.2L435.34 480.3L436.03 484L436.71 484L437.39 484L438.07 470.3L438.76 470.3L439.44 475.4L440.12 475.4L440.8 475.4L441.49 479.9L442.17 486.5L442.85 488.7L443.53 489.8L444.22 489.8L444.9 489.8L445.58 487.9L446.26 478.5L446.95 475.6L447.63 475.6L448.31 475.8L448.99 475.8L449.68 483.2L450.36 483.2L451.04 483.2L451.72 476.5L452.41 477.1L453.09 477.1L453.77 481.4L454.45 481.4L455.14 481.4L455.82 474.2L456.5 485.9L457.18 485.9L457.87 485.9L458.55 477.5L459.23 475L459.91 475L460.6 476.8L461.28 481.7L461.96 481.7L462.64 481.7L463.33 471.3L464.01 479.6L464.69 486.3L465.37 486.3L466.06 486.3L466.74 481.2L467.42 479.6L468.1 479.6L468.79 479.6L469.47 468.7L470.15 480.5L470.83 480.5L471.52 480.5L472.2 482.4L472.88 482.4L473.56 489.9L474.25 489.9L474.93 489.9L475.61 482.3L476.29 480.1L476.98 477.3L477.66 477.3L478.34 480.3L479.02 480.3L479.71 487.7L480.39 487.7L481.07 495.6L481.75 495.6L482.44 495.6L483.12 491.5L483.8 483.2L484.48 483.2L485.17 482.6L485.85 482.6L486.53 485.1L487.21 485.1L487.9 488.6L488.58 492.5L489.26 492.5L489.94 492.5L490.63 483.9L491.31 487.3L491.99 487.3L492.67 492.3L493.36 492.3L494.04 492.3L494.72 487.1L495.4 483.2L496.09 483.2L496.77 486.9L497.45 486.9L498.13 486.9L498.82 491.6L499.5 491.6L500.18 491.6L500.86 491.4L501.55 482.6L502.23 482.1L502.91 484.6L503.59 485.7L504.28 489.9L504.96 490.3L505.64 490.3L506.32 490.3L507.01 485.9L507.69 489.4L508.37 489.4L509.05 489.4L509.74 485L510.42 485L511.1 484.9L511.78 487.1L512.47 487.1L513.15 487.1L513.83 484.5L514.51 484.7L515.2 484.7L515.88 492L516.56 492L517.24 492.4L517.93 492.4L518.61 492.4L519.29 488.8L519.97 488.8L520.66 488.8L521.34 476.3L522.02 488.5L522.7 492L523.39 492L524.07 497.6L524.75 497.6L525.43 497.6L526.12 491.2L526.8 491.2L527.48 493.3L528.16 493.3L528.85 493.3L529.53 489.5L530.21 485.6L530.89 494.9L531.58 494.9L532.26 494.9L532.94 488.4L533.62 483.3L534.31 483.3L534.99 487.2L535.67 487.2L536.35 487.2L537.04 489.2L537.72 489.2L538.4 489.2L539.08 476.9L539.77 484.8L540.45 484.8L541.13 495.4L541.81 495.4L542.5 495.8L543.18 495.8L543.86 495.8L544.54 490.2L545.23 490.2L545.91 478.1L546.59 478.1L547.27 483.2L547.96 483.2L548.64 483.2L549.32 490.9L550 490.9L550.69 491.2L551.37 491.2L552.05 491.2L552.73 497.4L553.42 497.4L554.1 497.4L554.78 495.4L555.46 495.4L556.15 500.6L556.83 500.6L557.51 500.6L558.19 490.3L558.88 493.8L559.56 493.8L560.24 495.1L560.92 495.1L561.61 495.1L562.29 496L562.97 504.5L563.65 504.5L564.34 504.5L565.02 500L565.7 500L566.38 500L567.07 497.9L567.75 498.7L568.43 500.8L569.11 504.9L569.8 504.9L570.48 504.9L571.16 503.2L571.84 502.1L572.53 495.3L573.21 495.3L573.89 504.2L574.57 504.2L575.26 504.2L575.94 500.8L576.62 493L577.3 493L577.99 493L578.67 495.5L579.35 498L580.03 498L580.72 498L581.4 498.9L582.08 498.9L582.76 500.9L583.45 500.9L584.13 507.3L584.81 507.3L585.49 507.3L586.18 506.4L586.86 502.5L587.54 503.7L588.22 503.7L588.91 503.7L589.59 498.9L590.27 496.4L590.95 505.6L591.64 505.6L592.32 508.7L593 508.7L593.68 508.7L594.37 504.7L595.05 504.7L595.73 504.7L596.41 500L597.1 502.5L597.78 502.5L598.46 502.5L599.14 503.1L599.83 503.1L600.51 503.3L601.19 503.3L601.87 503.3L602.56 500.1L603.24 500.1L603.92 499.2L604.6 502L605.29 502L605.97 507.6L606.65 510.9L607.33 511.9L608.02 511.9L608.7 511.9L609.38 509.4L610.06 508.4L610.75 508.4L611.43 502.7L612.11 499.9L612.79 503.4L613.48 503.4L614.16 505.9L614.84 505.9L615.52 505.9L616.21 505.1L616.89 500.3L617.57 500.3L618.25 505.2L618.94 510.1L619.62 510.1L620.3 510.1L620.98 509.5L621.67 504L622.35 506.6L623.03 506.6L623.71 507L624.4 507.4L625.08 510.1L625.76 515.8L626.44 515.8L627.13 515.8L627.81 508L628.49 509.7L629.17 509.7L629.86 513.6L630.54 513.6L631.22 513.6L631.9 507.2L632.59 514.1L633.27 514.1L633.95 514.1L634.63 510.4L635.32 510.4L636 510.4L636.68 510.1L637.36 508.9L638.05 511.5L638.73 511.5L639.41 511.5L640.09 511.1L640.78 511.1L641.46 509.8L642.14 513.6L642.82 513.6L643.51 513.8L644.19 513.8L644.87 514.2L645.55 514.2L646.24 514.2L646.92 512.6L647.6 510.3L648.28 515.8L648.97 515.8L649.65 515.8L650.33 516.5L651.01 516.5L651.7 516.6L652.38 516.6L653.06 516.6L653.74 516.5L654.43 511.3L655.11 511.3L655.79 512.6L656.47 512.6L657.16 512.6L657.84 513.8L658.52 513.8L659.2 515.6L659.89 515.6L660.57 515.6L661.25 512L661.93 511.9L662.62 513.8L663.3 519.2L663.98 519.2L664.66 519.2L665.35 519L666.03 519L666.71 516.1L667.39 517.9L668.08 517.9L668.76 519.4L669.44 519.4L670.12 519.4L670.81 517.7L671.49 513.7L672.17 517.8L672.85 518.6L673.54 518.6L674.22 518.6L674.9 520.4L675.58 520.4L676.27 520.4L676.95 519.2L677.63 519.2L678.31 518.2L679 518.2L679.68 518.2L680.36 517.1L681.04 522L681.73 522L682.41 522L683.09 519L683.77 517.2L684.46 518.3L685.14 520.1L685.82 521L686.5 521L687.19 521L687.87 520.7L688.55 522L689.23 522L689.92 522L690.6 521.2L691.28 521.2L691.96 521.2L692.65 519.6L693.33 522.8L694.01 525.1L694.69 525.1L695.38 525.1L696.06 522.9L696.74 519.8L697.42 521L698.11 521.1L698.79 521.1L699.47 521.8L700.15 521.8L700.84 523L701.52 523L702.2 523L702.88 526L703.57 526L704.25 526L704.93 525.4L705.61 524.3L706.3 524.3L706.98 524.3L707.66 524.3L708.34 522.8L709.03 524L709.71 524L710.39 524L711.07 524L711.76 524L712.44 525.6L713.12 525.6L713.8 525.6L714.49 523.7L715.17 523.7L715.85 524L716.53 525.3L717.22 526.1L717.9 526.1L718.58 526.1L719.26 526.1L719.95 529L720.63 529L721.31 529L721.99 526.6L722.68 525.8L723.36 526.6L724.04 526.6L724.72 527.5L725.41 527.5L726.09 527.5L726.77 525.9L727.45 526.1L728.14 526.1L728.82 526.1L729.5 526.2L730.18 526.2L730.87 527.2L731.55 528.5L732.23 528.5L732.91 528.8L733.6 528.8L734.28 529.3L734.96 529.3L735.64 529.3L736.33 528.9L737.01 528.9L737.69 528.9L738.37 529.9L739.06 530.9L739.74 530.9L740.42 530.9L741.1 530.4L741.79 528.1L742.47 526.5L743.15 527.4L743.83 527.4L744.52 528L745.2 528L745.88 528.5L746.56 528.5L747.25 529.6L747.93 529.6L748.61 529.6L749.29 528.1L749.98 528.5L750.66 530.1L751.34 530.1L752.02 530.1L752.71 529.5L753.39 528.7L754.07 529.2L754.75 529.2L755.44 529.2L756.12 530.9L756.8 531.2L757.48 531.2L758.17 531.2L758.85 530.3L759.53 530.2L760.21 530.8L760.9 530.8L761.58 530.8L762.26 530.1L762.94 530.1L763.63 531L764.31 531.4L764.99 531.4L765.67 531.4L766.36 531.4L767.04 529.4L767.72 529.7L768.4 529.7L769.09 529.7L769.77 529.3L770.45 529.3L771.13 529.3L771.82 529.5L772.5 529.5L773.18 529.5L773.86 528.7L774.55 526.7L775.23 526.9L775.91 530.1L776.59 530.1L777.28 530.7L777.96 530.7L778.64 531.3L779.32 531.3L780.01 531.3L780.69 531.3L781.37 531.7L782.05 531.7L782.74 531.7L783.42 530.8L784.1 530.6L784.78 530.2L785.47 530.6L786.15 530.6L786.83 530.6L787.51 530.5L788.2 530.6L788.88 531.1L789.56 531.1L790.24 531.1L790.93 530.6L791.61 530.6L792.29 530.5L792.97 531.2L793.66 532.3L794.34 532.3L795.02 532.3L795.7 532.1L796.39 532.1L797.07 531.7L797.75 531.7L798.43 531.7L799.12 530.9L799.8 530.9L800.48 530.9L801.16 530.9L801.85 530.8L802.53 530.9L803.21 530.9L803.89 531.5L804.58 531.5L805.26 532.1L805.94 532.1L806.62 532.2L807.31 532.2L807.99 532.2L808.67 532.2L809.35 531.2L810.04 531.5L810.72 531.5L811.4 532L812.08 532L812.77 532L813.45 530.9L814.13 530.7L814.81 531.6L815.5 531.6L816.18 531.6L816.86 532.5L817.54 532.5L818.23 532.5L818.91 532.3L819.59 532.3L820.27 531.5L820.96 531.7L821.64 531.7L822.32 532.2L823 532.2L823.69 532.2L824.37 531.2L825.05 531.3L825.73 531.3L826.42 531.7L827.1 531.9L827.78 531.9L828.46 531.9L829.15 531.4L829.83 530.9L830.51 529.1L831.19 531.9L831.88 531.9L832.56 532.5L833.24 533.1L833.92 533.1L834.61 533.1L835.29 532.7L835.97 532.7L836.65 531.7L837.34 533.2L838.02 533.2L838.7 533.2L839.38 533.1L840.07 533.1L840.75 531.8L841.43 531.6L842.11 531.8L842.8 531.8L843.48 531.8L844.16 530.4L844.84 531.7L845.53 532.6L846.21 533.1L846.89 533.1L847.57 533.1L848.26 532.8L848.94 532.8L849.62 532.8L850.3 532.8L850.99 532.8L851.67 532.8L852.35 532.7L853.03 532.8L853.72 532.8L854.4 532.8L855.08 531.7L855.76 531.7L856.45 533L857.13 533.4L857.81 533.4L858.49 533.4L859.18 533.6L859.86 533.6L860.54 533.6L861.22 532.1L861.91 531.6L862.59 533.3L863.27 533.3L863.95 533.3L864.64 532.5L865.32 532.5L866 532.5L866.68 532L867.37 532L868.05 532.3L868.73 532.3L869.41 532.3L870.1 533.4L870.78 533.4L871.46 533.4L872.14 532.3L872.83 532.3L873.51 532.3L874.19 531.8L874.87 531.9L875.56 533.6L876.24 533.6L876.92 533.6L877.6 532.1L878.29 532.6L878.97 532.6L879.65 532.6L880.33 532L881.02 532.5L881.7 532.7L882.38 532.7L883.06 532.7L883.75 532.7L884.43 532.7L885.11 533.2L885.79 533.7L886.48 533.7L887.16 533.7L887.84 533.7L888.52 533.7L889.21 533.4L889.89 532.1L890.57 533.7L891.25 533.7L891.94 533.7L892.62 533.5L893.3 533.6L893.98 533.6L894.67 533.6L895.35 532.5L896.03 532.9L896.71 532.9L897.4 533.2L898.08 533.2L898.76 533.4L899.44 533.4L900.13 533.4L900.81 532.6L901.49 533.3L902.17 534.3L902.86 534.3L903.54 534.3L904.22 534L904.9 534L905.59 532.9L906.27 532.5L906.95 533.4L907.63 533.4L908.32 533.4L909 533.8L909.68 534.3L910.36 534.3L911.05 534.3L911.73 532.6L912.41 533.8L913.09 533.8L913.78 534.1L914.46 534.1L915.14 534.1L915.82 533.5L916.51 533.6L917.19 533.6L917.87 533.8L918.55 533.8L919.24 534L919.92 534L920.6 534L921.28 533.1L921.97 533.7L922.65 534.5L923.33 534.5L924.01 534.5L924.7 534.2L925.38 533.5L926.06 533.3L926.74 533.8L927.43 533.8L928.11 533.8L928.79 532.7L929.47 533L930.16 533L930.84 533L931.52 532.2L932.2 533.8L932.89 533.8L933.57 534.6L934.25 534.6L934.93 534.6L935.62 533.3L936.3 533.7L936.98 533.9L937.66 533.9L938.35 533.9L939.03 534.1L939.71 534.1L940.39 534.3L941.08 534.3L941.76 534.3L942.44 534.1L943.12 534.1L943.81 534.1L944.49 532.2L945.17 533L945.85 533.6L946.54 533.6L947.22 533.6L947.9 533.5L948.58 534.5L949.27 534.5L949.95 534.5L950.63 534L951.31 534L952 534L952.68 534.3L953.36 534.3L954.04 534.3L954.73 534.3L955.41 533.8L956.09 533.8L956.77 533.8L957.46 532.3L958.14 532.9L958.82 534.4L959.5 534.4L960.19 534.4L960.87 533.5L961.55 533.5L962.23 533.9L962.92 533.9L963.6 534L964.28 534.3L964.96 534.3L965.65 534.3L966.33 534.1L967.01 534.3L967.69 534.4L968.38 534.4L969.06 534.4L969.74 533.6L970.42 533.9L971.11 533.9L971.79 534.3L972.47 534.3L973.15 534.3L973.84 534.3L974.52 534.3L975.2 534.8L975.88 534.8L976.57 534.8L977.25 534.3L977.93 535L978.61 535.2L979.3 535.2L979.98 535.2L980.66 534.8L981.34 534.6L982.03 534.2L982.71 534.2L983.39 534.5L984.07 534.5L984.76 534.5L985.44 534L986.12 533.7L986.8 533.7L987.49 534.3L988.17 534.9L988.85 534.9L989.53 534.9L990.22 534L990.9 533.8L991.58 533.8L992.26 533.8L992.95 534.5L993.63 534.5L994.31 534.5L994.99 534.5L995.68 534.5L996.36 534.5L997.04 534L997.72 534L998.41 534.1L999.09 535.3L999.77 535.3L1000.45 535.3L1001.14 534.8L1001.82 534.5L1002.5 534.5L1003.18 534.1L1003.87 534.1L1004.55 533.2L1005.23 533.2L1005.91 533.7L1006.6 535.2L1007.28 535.2L1007.96 535.2L1008.64 534.8L1009.33 534.8L1010.01 534.9L1010.69 534.9L1011.37 534.9L1012.06 534.7L1012.74 535L1013.42 535L1014.1 535L1014.79 534.8L1015.47 534.8L1016.15 534.8L1016.83 534L1017.52 534.3L1018.2 534.9L1018.88 534.9L1019.56 534.9L1020.25 535L1020.93 535L1021.61 535L1022.29 534.5L1022.98 533.2L1023.66 534L1024.34 534L1025.02 534L1025.71 535.2L1026.39 535.2L1027.07 535.2L1027.75 534.1L1028.44 534.5L1029.12 534.5L1029.8 534.5L1030.48 534.2L1031.17 534.2L1031.85 533.6L1032.53 534.4L1033.21 535.4L1033.9 535.4L1034.58 535.4L1035.26 535.1L1035.94 534.9L1036.63 534.9L1037.31 534.9L1037.99 534L1038.67 535.7L1039.36 535.7L1040.04 535.7L1040.72 534.7L1041.4 533.9L1042.09 534.9L1042.77 534.9L1043.45 534.9L1044.13 534.7L1044.82 534.6L1045.5 535.7L1046.18 535.7L1046.86 535.7L1047.55 535.5L1048.23 535.5L1048.91 535.5L1049.59 534.7L1050.28 534.9L1050.96 534.9L1051.64 535.1L1052.32 535.1L1053.01 535.1L1053.69 534.5L1054.37 535.2L1055.05 535.2L1055.74 535.2L1056.42 535.4L1057.1 535.4L1057.78 535.4L1058.47 534.8L1059.15 534.8L1059.83 534.8L1060.51 534.8L1061.2 534.1L1061.88 534.2L1062.56 535.7L1063.24 535.7L1063.93 535.7L1064.61 534.9L1065.29 534.4L1065.97 534.4L1066.66 534.2L1067.34 535.4L1068.02 535.5L1068.7 535.5L1069.39 535.6L1070.07 535.6L1070.75 535.6L1071.43 534.9L1072.12 534.9L1072.8 534.9L1073.48 534.5L1074.16 535.1L1074.85 535.1L1075.53 535.1L1076.21 533.4L1076.21 539.5L1075.53 539L1074.85 539L1074.16 539L1073.48 539.3L1072.8 539.1L1072.12 539.1L1071.43 538.9L1070.75 538.9L1070.07 538.9L1069.39 539.2L1068.7 539.2L1068.02 539.2L1067.34 539.3L1066.66 539.3L1065.97 539.3L1065.29 539.3L1064.61 539.3L1063.93 539.5L1063.24 539.5L1062.56 539.5L1061.88 539.5L1061.2 539.5L1060.51 539.5L1059.83 539.5L1059.15 539.5L1058.47 539.2L1057.78 539.2L1057.1 539.2L1056.42 539.3L1055.74 539.3L1055.05 539.3L1054.37 539.3L1053.69 539.5L1053.01 539.6L1052.32 539.5L1051.64 539.5L1050.96 539.2L1050.28 539.2L1049.59 539.2L1048.91 539L1048.23 539L1047.55 539L1046.86 539.2L1046.18 539L1045.5 539L1044.82 539L1044.13 539.3L1043.45 539.1L1042.77 539.1L1042.09 539.1L1041.4 539.5L1040.72 539.5L1040.04 539.5L1039.36 539.5L1038.67 539.5L1037.99 539.5L1037.31 539.5L1036.63 539.4L1035.94 539.3L1035.26 539.2L1034.58 539.2L1033.9 539.2L1033.21 539.6L1032.53 539.3L1031.85 539.3L1031.17 539.3L1030.48 539.1L1029.8 539.1L1029.12 539.1L1028.44 539.6L1027.75 539.6L1027.07 539.1L1026.39 539.1L1025.71 539.1L1025.02 539.4L1024.34 539.4L1023.66 539.4L1022.98 539.4L1022.29 539.4L1021.61 539.6L1020.93 539.5L1020.25 539.2L1019.56 539.2L1018.88 539.2L1018.2 539.3L1017.52 538.8L1016.83 538.8L1016.15 538.8L1015.47 539.4L1014.79 539.4L1014.1 539.4L1013.42 539.5L1012.74 539.7L1012.06 539.7L1011.37 539.3L1010.69 539.3L1010.01 539.3L1009.33 539.1L1008.64 539.1L1007.96 539L1007.28 539L1006.6 539L1005.91 539.7L1005.23 539.3L1004.55 539.3L1003.87 539.2L1003.18 539.2L1002.5 539.2L1001.82 539.4L1001.14 539.4L1000.45 539L999.77 539L999.09 539L998.41 538.8L997.72 538.8L997.04 538.8L996.36 539.7L995.68 539.5L994.99 539L994.31 539L993.63 539L992.95 539.1L992.26 539.3L991.58 539.3L990.9 539.5L990.22 539.5L989.53 539.4L988.85 539.3L988.17 539.1L987.49 539.1L986.8 539.1L986.12 539.2L985.44 539.5L984.76 539.4L984.07 539.4L983.39 538.8L982.71 538.8L982.03 538.8L981.34 539.5L980.66 539.5L979.98 539.5L979.3 539.6L978.61 539.6L977.93 539.1L977.25 539.1L976.57 539.1L975.88 539.5L975.2 539.5L974.52 539.5L973.84 539.3L973.15 539.3L972.47 539.3L971.79 539.5L971.11 539.5L970.42 539.3L969.74 539.3L969.06 539.3L968.38 539.5L967.69 539.5L967.01 539.5L966.33 539.6L965.65 539.6L964.96 539.6L964.28 539.2L963.6 539.2L962.92 539.2L962.23 538.6L961.55 538.6L960.87 538.6L960.19 539.2L959.5 539.1L958.82 539.1L958.14 538.5L957.46 538.5L956.77 538.5L956.09 539.2L955.41 539.2L954.73 539.2L954.04 539L953.36 539L952.68 539L952 539.1L951.31 539.3L950.63 539.3L949.95 539.1L949.27 538.8L948.58 538.8L947.9 538.8L947.22 538.7L946.54 538.7L945.85 538.7L945.17 538.8L944.49 538.8L943.81 538.9L943.12 538.9L942.44 539.5L941.76 538.8L941.08 538.8L940.39 538.8L939.71 539.5L939.03 539.5L938.35 539.5L937.66 539.4L936.98 539.4L936.3 539.2L935.62 538.8L934.93 538.8L934.25 538.8L933.57 539.2L932.89 539.2L932.2 539.2L931.52 539.3L930.84 539.3L930.16 539.3L929.47 539.3L928.79 539.3L928.11 539.4L927.43 538.9L926.74 538.7L926.06 538.7L925.38 538.7L924.7 538.7L924.01 538.8L923.33 538.8L922.65 538.8L921.97 538.8L921.28 539.1L920.6 539.1L919.92 539.1L919.24 539.1L918.55 539.1L917.87 539.1L917.19 539.2L916.51 539.2L915.82 539.2L915.14 539.2L914.46 539.4L913.78 539.4L913.09 539.5L912.41 539.5L911.73 539.2L911.05 539.2L910.36 539.2L909.68 539.2L909 539.1L908.32 539.1L907.63 539.1L906.95 539.3L906.27 539.3L905.59 539.3L904.9 539.3L904.22 538.7L903.54 538.7L902.86 538.7L902.17 538.9L901.49 538.9L900.81 538.9L900.13 539L899.44 539L898.76 539L898.08 538.9L897.4 538.8L896.71 538.8L896.03 538.8L895.35 539.4L894.67 538.6L893.98 538.6L893.3 538.6L892.62 539.2L891.94 539.4L891.25 539.4L890.57 539.4L889.89 539.3L889.21 539.3L888.52 539.2L887.84 539.2L887.16 539.2L886.48 539.3L885.79 538.9L885.11 538.7L884.43 538.7L883.75 538.7L883.06 539.2L882.38 539.2L881.7 539.2L881.02 539.2L880.33 539.2L879.65 539.3L878.97 539.3L878.29 539.3L877.6 538.5L876.92 538.5L876.24 538.5L875.56 539.3L874.87 539.3L874.19 539.4L873.51 539L872.83 539L872.14 539L871.46 539L870.78 539L870.1 539L869.41 539L868.73 539.1L868.05 539.7L867.37 539.5L866.68 539.5L866 539.5L865.32 539L864.64 539L863.95 539L863.27 539.1L862.59 539.2L861.91 539.4L861.22 539.4L860.54 539.4L859.86 539.4L859.18 539.4L858.49 539.4L857.81 539.4L857.13 539.2L856.45 538.9L855.76 538.2L855.08 538.2L854.4 538.2L853.72 538.7L853.03 538.7L852.35 538.7L851.67 539.1L850.99 539.1L850.3 539.4L849.62 538.4L848.94 538.4L848.26 538.4L847.57 539.5L846.89 539.1L846.21 539.1L845.53 539.1L844.84 539L844.16 538.7L843.48 538.7L842.8 538.7L842.11 539.3L841.43 539.3L840.75 539.3L840.07 538.4L839.38 538.4L838.7 538.4L838.02 538.5L837.34 538.9L836.65 538.9L835.97 538.7L835.29 538.7L834.61 538.7L833.92 539.5L833.24 539.5L832.56 539.3L831.88 538.8L831.19 538.8L830.51 538.8L829.83 539L829.15 539L828.46 539.4L827.78 539.5L827.1 539.5L826.42 538.7L825.73 538.7L825.05 538.7L824.37 539.1L823.69 539.1L823 539L822.32 539L821.64 538.2L820.96 538.2L820.27 538.2L819.59 538.4L818.91 538.4L818.23 538.8L817.54 538.8L816.86 539L816.18 539L815.5 539L814.81 538.9L814.13 538.9L813.45 538.9L812.77 538.7L812.08 538.7L811.4 538.7L810.72 539.1L810.04 539.1L809.35 538L808.67 538L807.99 538L807.31 539.2L806.62 539.1L805.94 539.1L805.26 539.1L804.58 539.2L803.89 538.9L803.21 538.9L802.53 538.6L801.85 538.1L801.16 538.1L800.48 538.1L799.8 538.3L799.12 538.3L798.43 538.5L797.75 538.5L797.07 538.9L796.39 538.9L795.7 538.7L795.02 538.7L794.34 538.7L793.66 538.6L792.97 538.6L792.29 538.6L791.61 538.8L790.93 538.8L790.24 538.8L789.56 539.6L788.88 538.8L788.2 538.8L787.51 538.8L786.83 538.8L786.15 538.8L785.47 538.6L784.78 538.6L784.1 538.6L783.42 538.6L782.74 539.3L782.05 539L781.37 539L780.69 539L780.01 539.5L779.32 538.2L778.64 538.2L777.96 538.2L777.28 538.9L776.59 538.6L775.91 538.6L775.23 538.6L774.55 538.7L773.86 538.3L773.18 538.3L772.5 538.3L771.82 539.1L771.13 538.8L770.45 538.8L769.77 537.1L769.09 537.1L768.4 537.1L767.72 539.3L767.04 538.5L766.36 538.5L765.67 538.5L764.99 538.9L764.31 538.9L763.63 538.5L762.94 538.5L762.26 538.5L761.58 538.6L760.9 538.6L760.21 539.2L759.53 539.2L758.85 538.1L758.17 538.1L757.48 537.8L756.8 537.8L756.12 537.8L755.44 538.9L754.75 538.9L754.07 538.9L753.39 539.2L752.71 539.2L752.02 539.3L751.34 539.4L750.66 538.3L749.98 538.3L749.29 538.3L748.61 538.5L747.93 538.5L747.25 538.8L746.56 538.2L745.88 538.2L745.2 538.2L744.52 538.7L743.83 539.2L743.15 538.4L742.47 538.4L741.79 537.8L741.1 537.8L740.42 537.8L739.74 538.6L739.06 539.1L738.37 539.1L737.69 538.7L737.01 538.7L736.33 538.7L735.64 539L734.96 539L734.28 537.5L733.6 537.5L732.91 537.5L732.23 538.3L731.55 538.8L730.87 538.8L730.18 536.4L729.5 536.4L728.82 536.4L728.14 537.9L727.45 537.9L726.77 537.9L726.09 538.4L725.41 538.3L724.72 538.3L724.04 538L723.36 538L722.68 538L721.99 538.2L721.31 538.2L720.63 538.1L719.95 538.1L719.26 538.1L718.58 538.8L717.9 537.8L717.22 537.8L716.53 537.8L715.85 538.1L715.17 538.3L714.49 538.3L713.8 538.3L713.12 538.8L712.44 538.8L711.76 538.8L711.07 538.4L710.39 538.4L709.71 538.4L709.03 537.5L708.34 537.5L707.66 537.5L706.98 536.9L706.3 535.9L705.61 535.9L704.93 535.9L704.25 537.4L703.57 537.4L702.88 537.7L702.2 538.5L701.52 536.8L700.84 536.8L700.15 536.8L699.47 538.2L698.79 537.2L698.11 537.2L697.42 536.6L696.74 536.6L696.06 536.6L695.38 537.5L694.69 537.8L694.01 537.8L693.33 538.2L692.65 538.2L691.96 538.4L691.28 538.1L690.6 537.8L689.92 537.8L689.23 536.4L688.55 536.4L687.87 536.4L687.19 536.9L686.5 536.9L685.82 537.3L685.14 537.4L684.46 537.4L683.77 537.3L683.09 536.1L682.41 536.1L681.73 536.1L681.04 538.4L680.36 538.4L679.68 538.5L679 538.5L678.31 538.3L677.63 538.2L676.95 538L676.27 538L675.58 536.8L674.9 536.8L674.22 536.8L673.54 538.2L672.85 538.2L672.17 538.2L671.49 537.3L670.81 536.3L670.12 536.3L669.44 536.3L668.76 537.8L668.08 537.8L667.39 537.8L666.71 538.4L666.03 538.4L665.35 538.1L664.66 538.1L663.98 536.2L663.3 536.2L662.62 536.2L661.93 535.8L661.25 535.8L660.57 535.8L659.89 534.5L659.2 534.5L658.52 534.5L657.84 535.1L657.16 535.1L656.47 535.1L655.79 537.9L655.11 537.9L654.43 536.4L653.74 536.4L653.06 535L652.38 535L651.7 535L651.01 536.8L650.33 534.8L649.65 534.8L648.97 534.8L648.28 536.1L647.6 536.1L646.92 536.1L646.24 536.5L645.55 536.5L644.87 538.1L644.19 538.1L643.51 536.5L642.82 536.5L642.14 536.5L641.46 537.9L640.78 537.9L640.09 537.9L639.41 537.5L638.73 537.4L638.05 537.4L637.36 534.1L636.68 534.1L636 534.1L635.32 534.6L634.63 535.2L633.95 534.5L633.27 534.5L632.59 534.4L631.9 534.4L631.22 534.4L630.54 533.9L629.86 533.9L629.17 533.9L628.49 535.4L627.81 535.4L627.13 537.3L626.44 537.2L625.76 537.2L625.08 537.2L624.4 537.3L623.71 536.7L623.03 536.7L622.35 536.7L621.67 536.2L620.98 536.2L620.3 536.2L619.62 536.3L618.94 535.8L618.25 534.8L617.57 534.8L616.89 534.8L616.21 536.4L615.52 536.4L614.84 538.2L614.16 537.2L613.48 535.3L612.79 535.3L612.11 533.3L611.43 533.3L610.75 533.3L610.06 536.8L609.38 536.8L608.7 534.3L608.02 534.3L607.33 534.3L606.65 532.7L605.97 532.7L605.29 532.7L604.6 536.4L603.92 536.4L603.24 535.2L602.56 535.2L601.87 535.2L601.19 535L600.51 535L599.83 533.7L599.14 533.7L598.46 533.7L597.78 532.7L597.1 532.7L596.41 532.7L595.73 534L595.05 534L594.37 534L593.68 537L593 535.1L592.32 535.1L591.64 535.1L590.95 536.1L590.27 531.9L589.59 531.9L588.91 531.9L588.22 534L587.54 534L586.86 536.1L586.18 537.7L585.49 537.4L584.81 537.3L584.13 535.5L583.45 535.5L582.76 533.9L582.08 533.9L581.4 533.9L580.72 534.6L580.03 535.5L579.35 535.5L578.67 535.7L577.99 535.7L577.3 535.7L576.62 537L575.94 531.1L575.26 531.1L574.57 531.1L573.89 535.8L573.21 535.8L572.53 533.5L571.84 533.5L571.16 533.5L570.48 536.4L569.8 533.4L569.11 533.4L568.43 533.3L567.75 533.3L567.07 533.3L566.38 532.9L565.7 532.9L565.02 532.9L564.34 535.5L563.65 536.2L562.97 536.2L562.29 536.2L561.61 531.7L560.92 530.1L560.24 530.1L559.56 530.1L558.88 533L558.19 533L557.51 533L556.83 532.1L556.15 532.1L555.46 531L554.78 531L554.1 531L553.42 533.4L552.73 533.4L552.05 536.3L551.37 534.2L550.69 534.2L550 534.2L549.32 535.6L548.64 534.1L547.96 533.9L547.27 533.9L546.59 533.9L545.91 535L545.23 535L544.54 535L543.86 533.1L543.18 532.8L542.5 532.8L541.81 532.8L541.13 533.6L540.45 534.7L539.77 534.7L539.08 534.2L538.4 529.7L537.72 529.7L537.04 529.7L536.35 532.2L535.67 534.1L534.99 531.7L534.31 531.7L533.62 531.7L532.94 532.1L532.26 532.1L531.58 532.1L530.89 532.2L530.21 532.2L529.53 532.6L528.85 532.6L528.16 534.1L527.48 533.1L526.8 531.1L526.12 531.1L525.43 531.1L524.75 532.1L524.07 532.8L523.39 532.8L522.7 535.1L522.02 535.1L521.34 535L520.66 533.9L519.97 533.9L519.29 532.2L518.61 532.2L517.93 532.2L517.24 532.9L516.56 534.1L515.88 536.4L515.2 533.6L514.51 533.6L513.83 533.6L513.15 533.6L512.47 533.6L511.78 530.7L511.1 530.7L510.42 530.7L509.74 533.2L509.05 533.2L508.37 533.2L507.69 536.6L507.01 535.5L506.32 534.3L505.64 534.3L504.96 534.3L504.28 534.9L503.59 531.7L502.91 530.1L502.23 530.1L501.55 530.1L500.86 534.7L500.18 534.7L499.5 531.9L498.82 528.8L498.13 528.8L497.45 528.8L496.77 534.1L496.09 534.6L495.4 533.4L494.72 532.3L494.04 532.3L493.36 532L492.67 532L491.99 532L491.31 533.8L490.63 523.6L489.94 523.6L489.26 523.6L488.58 534.2L487.9 534.2L487.21 534.2L486.53 534.4L485.85 536.4L485.17 536.4L484.48 532L483.8 530.2L483.12 530.2L482.44 530.2L481.75 533.4L481.07 533.4L480.39 529.6L479.71 529.6L479.02 524.5L478.34 524.5L477.66 524.5L476.98 530.3L476.29 530.3L475.61 533.4L474.93 535.9L474.25 524.2L473.56 524.2L472.88 524.2L472.2 532L471.52 532L470.83 536.3L470.15 536.3L469.47 533.9L468.79 533.9L468.1 533.9L467.42 527.8L466.74 527.8L466.06 527.8L465.37 530.8L464.69 530.8L464.01 528.7L463.33 528.7L462.64 528.7L461.96 531L461.28 529L460.6 529L459.91 529L459.23 533.5L458.55 529.1L457.87 529.1L457.18 529.1L456.5 535.3L455.82 533.6L455.14 533.6L454.45 533.6L453.77 534.1L453.09 534.1L452.41 527.8L451.72 527.8L451.04 527.8L450.36 537.8L449.68 535.7L448.99 532.5L448.31 532.5L447.63 532.5L446.95 529.9L446.26 529.9L445.58 529.9L444.9 535.2L444.22 536.5L443.53 536.5L442.85 532.1L442.17 532.1L441.49 532.1L440.8 536.6L440.12 532.2L439.44 532.2L438.76 532.2L438.07 534.7L437.39 534.7L436.71 535L436.03 525.6L435.34 525.6L434.66 525.6L433.98 526.1L433.3 529.5L432.61 529.5L431.93 529.5L431.25 536.8L430.57 530.4L429.88 524.2L429.2 524.2L428.52 524.2L427.84 533L427.15 532.8L426.47 528.7L425.79 528.7L425.11 528L424.42 528L423.74 528L423.06 532.4L422.38 530.2L421.69 530.2L421.01 530.2L420.33 528.8L419.65 528.8L418.96 528.8L418.28 533L417.6 534.3L416.92 534.3L416.23 530.5L415.55 530.5L414.87 530.5L414.19 530.9L413.5 533.4L412.82 535.5L412.14 534.5L411.46 533.2L410.77 533.2L410.09 533.2L409.41 533.7L408.73 533.7L408.04 536.1L407.36 528.8L406.68 528.8L406 528.8L405.31 530.8L404.63 531L403.95 532.8L403.27 526.9L402.58 526.9L401.9 526.9L401.22 533.3L400.54 531.2L399.85 531.2L399.17 531.2L398.49 532.7L397.81 530.3L397.12 527.9L396.44 527.9L395.76 527.9L395.08 529.4L394.39 529.4L393.71 529.4L393.03 530.7L392.35 530.7L391.66 530.7L390.98 534L390.3 525.5L389.62 525.5L388.93 525.5L388.25 531.7L387.57 528.3L386.89 528.3L386.2 528.3L385.52 531.9L384.84 534.6L384.16 534.6L383.47 534.6L382.79 534.9L382.11 534.9L381.43 537.2L380.74 537.2L380.06 531.2L379.38 531.2L378.7 531.2L378.01 533.6L377.33 533.6L376.65 533.6L375.97 534.5L375.28 533.4L374.6 533.4L373.92 531.7L373.24 530.9L372.55 530.9L371.87 530.9L371.19 526.5L370.51 526.5L369.82 520.8L369.14 520.8L368.46 520.8L367.78 536.1L367.09 536.2L366.41 533.1L365.73 533.1L365.05 525.6L364.36 525.6L363.68 525.6L363 527.5L362.32 527.5L361.63 531.5L360.95 528L360.27 528L359.59 528L358.9 533.3L358.22 533.3L357.54 534.2L356.86 534.2L356.17 533L355.49 533L354.81 528.4L354.13 528.4L353.44 528.4L352.76 527.2L352.08 527.2L351.4 527.2L350.71 531.6L350.03 531.6L349.35 528L348.67 528L347.98 528L347.3 532.4L346.62 527.7L345.94 527.7L345.25 527.7L344.57 532.6L343.89 528.8L343.21 528.8L342.52 528.8L341.84 528.8L341.16 535.5L340.48 532.5L339.79 531.4L339.11 524.6L338.43 519.6L337.75 519.6L337.06 519.6L336.38 529.5L335.7 529.5L335.02 529.5L334.33 530.6L333.65 527.7L332.97 527.7L332.29 527.7L331.6 533.5L330.92 523.9L330.24 523.9L329.56 523.9L328.87 528.6L328.19 528L327.51 528L326.83 528L326.14 529L325.46 529L324.78 529L324.1 536L323.41 532.7L322.73 523.2L322.05 523.2L321.37 523.2L320.68 531.5L320 531.5L319.32 530.7L318.64 526.4L317.95 523.6L317.27 523.6L316.59 523.6L315.91 535.7L315.22 524.6L314.54 524.6L313.86 524.6L313.18 530L312.49 530L311.81 530L311.13 533.3L310.45 528.7L309.76 528.7L309.08 528.7L308.4 530.7L307.72 530.7L307.03 530.7L306.35 526.2L305.67 526.2L304.99 526.2L304.3 527.4L303.62 534.1L302.94 528.7L302.26 528.7L301.57 528.7L300.89 532.1L300.21 532.1L299.53 533.5L298.84 533.5L298.16 533.5L297.48 533.6L296.8 533.6L296.11 533.6L295.43 521.7L294.75 521.7L294.07 521.7L293.38 529.6L292.7 529.6L292.02 531.8L291.34 531.4L290.65 531.4L289.97 531.2L289.29 528.8L288.61 528.8L287.92 528.8L287.24 530.5L286.56 531L285.88 531L285.19 527.4L284.51 527.4L283.83 527.4L283.15 530L282.46 530L281.78 530.9L281.1 528.9L280.42 528.9L279.73 528.9L279.05 529.9L278.37 534.4L277.69 534.3L277 534.3L276.32 534.3L275.64 532.4L274.96 532.4L274.27 532.4L273.59 528.2L272.91 528.2L272.23 528.2L271.54 533.9L270.86 524.5L270.18 524.5L269.5 524.5L268.81 527.5L268.13 527.5L267.45 524.8L266.77 524.8L266.08 524.8L265.4 528.6L264.72 528.9L264.04 528.9L263.35 531.8L262.67 531.8L261.99 523.3L261.31 523.3L260.62 523.3L259.94 525.1L259.26 525.1L258.58 525.1L257.89 530.7L257.21 530.7L256.53 527.7L255.85 527.7L255.16 525.3L254.48 525.3L253.8 525.3L253.12 533.6L252.43 533.6L251.75 532.9L251.07 524.5L250.39 524.5L249.7 523.6L249.02 523.6L248.34 523.1L247.66 523.1L246.97 523.1L246.29 526.4L245.61 532.4L244.93 527.1L244.24 527.1L243.56 527.1L242.88 522L242.2 522L241.51 522L240.83 529L240.15 529L239.47 529.1L238.78 529.1L238.1 530.3L237.42 530.3L236.74 528.9L236.05 525.5L235.37 525.5L234.69 525.5L234.01 529L233.32 526L232.64 526L231.96 525.6L231.28 525.6L230.59 525.6L229.91 529.9L229.23 529.4L228.55 523.3L227.86 523.3L227.18 523.3L226.5 528L225.82 529.5L225.13 529.5L224.45 525L223.77 525L223.09 525L222.4 526L221.72 526L221.04 526L220.36 520L219.67 520L218.99 519L218.31 519L217.63 519L216.94 532.8L216.26 524.5L215.58 524.5L214.9 524.5L214.21 527.4L213.53 527.4L212.85 531.6L212.17 531.6L211.48 532.5L210.8 531.7L210.12 523L209.44 523L208.75 523L208.07 526.4L207.39 529.4L206.71 527.8L206.02 527.8L205.34 527.8L204.66 523.2L203.98 523.2L203.29 521.2L202.61 521.2L201.93 521.2L201.25 526.7L200.56 525.4L199.88 525.4L199.2 518.1L198.52 518.1L197.83 518.1L197.15 531.5L196.47 530.1L195.79 530.1L195.1 530.1L194.42 534.9L193.74 531.7L193.06 530.8L192.37 530.8L191.69 524.6L191.01 524.6L190.33 524.6L189.64 525.4L188.96 530.8L188.28 525.6L187.6 525.6L186.91 525.6L186.23 527.3L185.55 527.3L184.87 527.5L184.18 529.8L183.5 528.7L182.82 528.7L182.14 528.7L181.45 529.2L180.77 526L180.09 526L179.41 526L178.72 532L178.04 528.6L177.36 518.8L176.68 518.8L175.99 518.8L175.31 531L174.63 527.1L173.95 526.1L173.26 525.6L172.58 525.6L171.9 525.6L171.22 526.2L170.53 526.2L169.85 527L169.17 533.2L168.49 532.5L167.8 532.5L167.12 523.7L166.44 523.7L165.76 523.7L165.07 523.6L164.39 520.2L163.71 520.2L163.03 520.2L162.34 528.3L161.66 524.6L160.98 524.6L160.3 524.6L159.61 525.3L158.93 518.4L158.25 518.4L157.57 518.4L156.88 524.8L156.2 524.8L155.52 527.4L154.84 527.4L154.15 520.2L153.47 520.2L152.79 520.2L152.11 523.5L151.42 529.8L150.74 529L150.06 529L149.38 523.6L148.69 523.6L148.01 523.6L147.33 519.8L146.65 518.9L145.96 518.9L145.28 518.9L144.6 526.3L143.92 515.2L143.23 515.2L142.55 515.2L141.87 531.3L141.19 518.1L140.5 518.1L139.82 518.1L139.14 529L138.46 528.5L137.77 519.2L137.09 519.2L136.41 519.2L135.73 532.5L135.04 525.4L134.36 525.4L133.68 525.4L133 529.2L132.31 529.2L131.63 532.2L130.95 518.2L130.27 518.2L129.58 518.2L128.9 530.8L128.22 530.1L127.54 530.1L126.85 527.8L126.17 527.8L125.49 527.8L124.81 528.1L124.12 529L123.44 519.7L122.76 519.7L122.08 519.7L121.39 521.7L120.71 530.1L120.03 511L119.35 511L118.66 511L117.98 517.1L117.3 517.1L116.62 525.4L115.93 525.4L115.25 524.9L114.57 522.3L113.89 522.3L113.2 522.3L112.52 522.8L111.84 522.8L111.16 522.8L110.47 520.2L109.79 520.2L109.11 520.2L108.43 527L107.74 514.7L107.06 514.7L106.38 514.7L105.7 522L105.01 522L104.33 522L103.65 527.2L102.97 527.2L102.28 527.2L101.6 520.4L100.92 518.2L100.24 518.2L99.55 518.2L98.87 517.1L98.19 517.1L97.51 517.1L96.82 521.6L96.14 520.5L95.46 520.5L94.78 520.5L94.09 526.9L93.41 532.3L92.73 530L92.05 530L91.36 519.5L90.68 519.5L90 519.5L89.32 525.8L88.63 524.5L87.95 524.5L87.27 524.5L86.59 523.9L85.9 520.8L85.22 519.7L84.54 519.2L83.86 519.2L83.17 519.2L82.49 526.3L81.81 525.1L81.13 525.1L80.44 525.1L79.76 524.9L79.08 511.6L78.4 511.6L77.71 511.6L77.03 523.1L76.35 518.4L75.67 518.4L74.98 518.4L74.3 526.1L73.62 527L72.94 527L72.25 528.1L71.57 523.4L70.89 523.4L70.21 523.4L69.52 524.3L68.84 529.6Z" fill="#00ff00"/><path d="M68.84 531.8V436M69.52 529.6V424.1M70.21 524.3V403.2M70.89 523.4V407.5M71.57 532.6V383.7M72.25 533.7V358.7M72.94 528.1V361.4M73.62 527V365M74.3 531.9V414M74.98 526.1V428.9M75.67 518.4V408.9M76.35 523.1V423.2M77.03 530.8V339M77.71 523.2V395.3M78.4 511.6V414.4M79.08 524.9V410.9M79.76 531.4V403.6M80.44 527.7V379M81.13 525.1V412.9M81.81 532.4V414.3M82.49 528.9V424.1M83.17 526.3V408M83.86 519.2V368.7M84.54 519.7V416.7M85.22 520.8V414.5M85.9 523.9V366.9M86.59 525.4V393.7M87.27 530.3V424.3M87.95 524.5V418.7M88.63 526.6V414.7M89.32 525.8V417.4M90 528.6V389.3M90.68 519.5V370.3M91.36 533.5V377.9M92.05 530V412M92.73 534.1V434.5M93.41 535V377.8M94.09 532.3V408M94.78 526.9V416.5M95.46 520.5V414.7M96.14 532.9V392.2M96.82 521.6V408.8M97.51 529.6V435.2M98.19 517.1V383.3M98.87 521.9V375M99.55 531.4V396.9M100.24 518.2V426.9M100.92 520.4V376M101.6 530.5V385.9M102.28 531.2V373.1M102.97 527.2V374.2M103.65 536.1V420.6M104.33 530V430.7M105.01 522V411.1M105.7 524.7V410.9M106.38 524.8V424.5M107.06 514.7V406.8M107.74 532.4V433.6M108.43 532.8V442.6M109.11 527V425.1M109.79 520.2V381.4M110.47 534V425.8M111.16 526.3V406.4M111.84 522.8V419.6M112.52 526.1V397.9M113.2 523.3V427.8M113.89 522.3V422.8M114.57 524.9V401.7M115.25 534.7V365M115.93 532.1V408.4M116.62 525.4V384.7M117.3 534.7V417.4M117.98 517.1V430.1M118.66 528V405.9M119.35 511V381.8M120.03 530.2V397.9M120.71 530.1V379.2M121.39 530.8V372.1M122.08 521.7V405.1M122.76 519.7V382.6M123.44 531.6V374.1M124.12 529V393.3M124.81 537.9V385.2M125.49 528.1V417.5M126.17 527.8V395.5M126.85 536.8V407.8M127.54 530.1V423.3M128.22 536.2V424.4M128.9 534.2V428.7M129.58 530.8V426M130.27 518.2V405.1M130.95 537.8V423.8M131.63 533.7V428.2M132.31 532.2V419.4M133 529.2V411.2M133.68 532.8V388.1M134.36 525.4V420M135.04 538.5V413.8M135.73 532.5V391.1M136.41 534.5V394.6M137.09 519.2V381.4M137.77 528.5V416.6M138.46 531.9V378.3M139.14 529V379.1M139.82 531.9V386.6M140.5 518.1V419.1M141.19 536.9V429.7M141.87 531.3V409.8M142.55 535.7V432.4M143.23 515.2V414M143.92 536.2V405.1M144.6 526.3V382.8M145.28 529.7V383.3M145.96 518.9V416.2M146.65 519.8V393.9M147.33 534.1V424.6M148.01 535.8V430.2M148.69 523.6V419.2M149.38 529.8V385.1M150.06 529V403.5M150.74 533.7V382.9M151.42 536.5V412.8M152.11 529.8V442.9M152.79 523.5V410.5M153.47 520.2V387.2M154.15 529.8V419.3M154.84 531V429.1M155.52 527.4V409.1M156.2 531.2V430.8M156.88 524.8V431.2M157.57 534.2V428.5M158.25 518.4V408.5M158.93 534.3V427.4M159.61 525.3V407.1M160.3 536.2V393.9M160.98 524.6V386.2M161.66 528.3V403.8M162.34 536.1V396.1M163.03 536.3V397.1M163.71 520.2V381.8M164.39 523.6V406.8M165.07 535.2V429.3M165.76 527.2V429.7M166.44 523.7V409.9M167.12 533.6V416M167.8 532.5V415.8M168.49 533.2V432.8M169.17 539.1V413.5M169.85 533.4V401.5M170.53 527V437.3M171.22 526.2V432.3M171.9 528.4V443.1M172.58 525.6V442.3M173.26 526.1V435.4M173.95 527.1V416.5M174.63 531V442.5M175.31 534.3V422.5M175.99 534.1V401.3M176.68 518.8V386.6M177.36 528.6V418.8M178.04 534.2V428.9M178.72 532V440.1M179.41 532.2V436.3M180.09 526V399.7M180.77 531.6V434.1M181.45 534.7V386.9M182.14 529.2V411.7M182.82 528.7V393.3M183.5 535.5V424.1M184.18 538.3V426.1M184.87 529.8V405.6M185.55 527.5V433M186.23 527.3V413.7M186.91 530.7V417.9M187.6 525.6V396M188.28 530.8V415.9M188.96 533.9V429.5M189.64 536.3V429.5M190.33 525.4V417.9M191.01 524.6V396M191.69 532.8V387.3M192.37 530.8V397.9M193.06 531.7V429M193.74 535V418.5M194.42 536V406.8M195.1 534.9V385.1M195.79 530.1V428.5M196.47 531.5V442.9M197.15 536.9V445.2M197.83 535.3V423M198.52 518.1V402M199.2 532.8V431M199.88 525.4V434.9M200.56 531.2V337.7M201.25 526.7V389.1M201.93 528.9V420.8M202.61 521.2V426.1M203.29 529.2V445.6M203.98 523.2V428.6M204.66 533.2V444.6M205.34 530.6V441.8M206.02 527.8V438.2M206.71 529.4V420.6M207.39 532.3V428.8M208.07 533V448.8M208.75 526.4V399.7M209.44 523V425.4M210.12 531.7V404.8M210.8 534V418.7M211.48 532.5V417.2M212.17 538.4V357.8M212.85 531.6V408.8M213.53 531.8V445.4M214.21 527.4V428.4M214.9 527.5V419.9M215.58 524.5V400.5M216.26 532.8V423.9M216.94 534.3V446.5M217.63 533.9V365M218.31 519V414M218.99 526.6V412.8M219.67 520V427.4M220.36 531.3V451.1M221.04 533.4V433.7M221.72 526V414.6M222.4 534.8V397.8M223.09 532.5V426.3M223.77 525V366.9M224.45 532.2V415.3M225.13 529.8V457M225.82 529.5V446.1M226.5 534.3V429.2M227.18 528V432.5M227.86 523.3V436.1M228.55 529.4V427.6M229.23 536.4V424.2M229.91 535.9V441M230.59 529.9V437.4M231.28 525.6V433.5M231.96 530.2V405.5M232.64 526V402M233.32 529V399.7M234.01 533.2V430.5M234.69 529.4V434.7M235.37 525.5V436.4M236.05 528.9V440.4M236.74 535V448M237.42 530.3V431.4M238.1 534.7V429.5M238.78 537.6V451.5M239.47 529.1V435.6M240.15 539V428M240.83 529V442.2M241.51 536.2V432M242.2 522V445.5M242.88 533.1V428.5M243.56 527.8V427.9M244.24 527.1V445.4M244.93 534.1V433.3M245.61 536.9V454.6M246.29 532.4V439.2M246.97 526.4V433.5M247.66 523.1V415.7M248.34 536V440.8M249.02 523.6V447.9M249.7 528.1V444.8M250.39 524.5V441.3M251.07 532.9V423.5M251.75 535.8V436.9M252.43 538.4V458.6M253.12 533.6V449.2M253.8 534.5V432.9M254.48 525.3V455.4M255.16 528.9V458.5M255.85 527.7V469.6M256.53 534.6V456.9M257.21 530.7V452.5M257.89 531.2V450.8M258.58 531.4V454.8M259.26 525.1V463.9M259.94 530.1V458.9M260.62 530.4V438.8M261.31 523.3V420.6M261.99 536.6V444.2M262.67 531.8V458.7M263.35 537.3V452.2M264.04 534.9V459.7M264.72 528.9V459.8M265.4 532.6V460.3M266.08 528.6V463.2M266.77 524.8V460M267.45 533.3V453.5M268.13 527.5V437.9M268.81 537.4V459.4M269.5 533V448.8M270.18 524.5V445.3M270.86 536.3V428.3M271.54 533.9V447.7M272.23 535.5V465.3M272.91 528.2V451.9M273.59 536.1V450.6M274.27 533.7V460.1M274.96 532.4V471.2M275.64 539V458.9M276.32 534.8V445.5M277 534.3V449.7M277.69 535.1V433.5M278.37 536.2V455.9M279.05 534.4V455.3M279.73 529.9V440M280.42 528.9V461.1M281.1 530.9V459.3M281.78 534.2V455.6M282.46 539.1V440.4M283.15 530V445.7M283.83 535.6V442.8M284.51 527.4V463.2M285.19 535.6V459.5M285.88 531V463.6M286.56 533.8V461.2M287.24 536.2V457.6M287.92 530.5V454.3M288.61 528.8V449.6M289.29 531.2V461.3M289.97 533.5V463.5M290.65 531.4V451.5M291.34 535.4V446.8M292.02 531.8V435M292.7 535.7V453.1M293.38 529.6V462.4M294.07 538.7V448.5M294.75 521.7V434.7M295.43 533.6V446.5M296.11 533.8V433.3M296.8 538.2V452.9M297.48 533.6V471.1M298.16 536.3V467.2M298.84 533.5V454.1M299.53 537.1V470.6M300.21 533.5V469.7M300.89 532.1V462M301.57 536.6V470.8M302.26 528.7V458.3M302.94 535.5V475.5M303.62 534.1V471.7M304.3 535.1V466.9M304.99 527.4V472.8M305.67 526.2V460.7M306.35 535.2V451M307.03 538.5V459.5M307.72 530.7V463M308.4 534.5V449.1M309.08 532V446.3M309.76 528.7V466M310.45 533.3V479M311.13 533.8V474.9M311.81 536.1V463.2M312.49 530V458.1M313.18 530.8V456.7M313.86 531.4V474.2M314.54 524.6V476.3M315.22 535.7V464.8M315.91 538.3V465.6M316.59 536.3V461.5M317.27 523.6V460M317.95 526.4V466.2M318.64 530.7V477.2M319.32 531.6V465.9M320 533.2V461.3M320.68 531.5V449.9M321.37 531.7V468.9M322.05 523.2V462.9M322.73 532.7V449.1M323.41 538.2V468.2M324.1 537.6V473.9M324.78 536V474.6M325.46 529V464.7M326.14 532.3V467.6M326.83 532V470.7M327.51 528V474.7M328.19 528.6V479.1M328.87 533.6V468.2M329.56 530.9V483.3M330.24 523.9V465.3M330.92 537.2V451.8M331.6 533.5V466.8M332.29 534V478.3M332.97 527.7V472.1M333.65 533.7V464.1M334.33 534.9V467.5M335.02 530.6V473.2M335.7 529.5V461.2M336.38 536.6V477.8M337.06 537.8V473.5M337.75 519.6V461.5M338.43 524.6V459.6M339.11 531.4V445.1M339.79 532.5V458.1M340.48 539V471.5M341.16 536.8V459.2M341.84 535.5V469.4M342.52 528.8V456.7M343.21 528.8V470.9M343.89 535.3V461.8M344.57 538V468.4M345.25 532.6V483.4M345.94 527.7V479.9M346.62 533.3V469.1M347.3 535V484M347.98 532.4V474.5M348.67 528V462.7M349.35 538V478.9M350.03 532.8V473.2M350.71 531.6V461.1M351.4 536.5V475.5M352.08 527.2V463.9M352.76 533.5V460.1M353.44 536.1V476.9M354.13 528.4V469.8M354.81 535.8V473.5M355.49 533V477M356.17 535.6V465.6M356.86 534.2V466.3M357.54 537.3V477.4M358.22 534.2V474.5M358.9 533.3V462.7M359.59 534.1V477.3M360.27 528V466M360.95 531.5V470.9M361.63 534.9V483.4M362.32 535.5V473.2M363 527.5V470.6M363.68 533.2V458.1M364.36 525.6V449M365.05 534.3V463.7M365.73 533.1V469.5M366.41 539V456.8M367.09 536.2V459.7M367.78 539.2V476.6M368.46 536.1V467M369.14 520.8V453.8M369.82 534.9V471.9M370.51 526.5V482.2M371.19 537V483.6M371.87 536.3V470.1M372.55 530.9V457.5M373.24 531.7V457.6M373.92 535V474.9M374.6 533.4V474.9M375.28 534.5V483.2M375.97 534.6V473M376.65 534.5V467.1M377.33 533.6V482.4M378.01 536.5V483.5M378.7 534.3V474.4M379.38 531.2V469M380.06 538.9V465M380.74 537.2V451.5M381.43 537.2V462.6M382.11 539.3V450.4M382.79 534.9V467.9M383.47 536.3V473.6M384.16 534.6V474M384.84 536.4V487.9M385.52 534.7V480.9M386.2 531.9V471.7M386.89 528.3V486.1M387.57 535.8V482M388.25 531.7V482.1M388.93 535.6V483.6M389.62 525.5V473.5M390.3 534V464.8M390.98 537.5V476.3M391.66 536.6V472.9M392.35 530.7V471.4M393.03 535.4V479.6M393.71 537.2V469.2M394.39 529.4V468.8M395.08 536.7V462M395.76 534.8V477.9M396.44 527.9V482.4M397.12 530.3V477.7M397.81 532.7V456.9M398.49 536.6V448.6M399.17 535.3V462.5M399.85 531.2V468.6M400.54 538.6V483.6M401.22 535V482.1M401.9 533.3V480M402.58 526.9V471.1M403.27 532.8V485.6M403.95 536.4V467.5M404.63 536.3V454.5M405.31 531V469.6M406 530.8V476.9M406.68 528.8V465.5M407.36 537.1V471.3M408.04 538.4V479.8M408.73 536.1V482M409.41 533.7V462.6M410.09 536.4V451.2M410.77 533.2V467.9M411.46 534.5V473.3M412.14 537.4V461.2M412.82 535.5V477.8M413.5 537.9V485.3M414.19 533.4V475.4M414.87 530.9V484.6M415.55 530.5V484M416.23 537.1V495.8M416.92 534.3V488.1M417.6 536.8V487.3M418.28 536.9V474.1M418.96 533V462.2M419.65 528.8V478.6M420.33 537.2V476.3M421.01 537.3V464.8M421.69 530.2V465.6M422.38 532.4V480.2M423.06 537.3V469.4M423.74 535.1V474.5M424.42 528V462.7M425.11 537.8V474M425.79 528.7V466.3M426.47 532.8V479M427.15 533V468.3M427.84 536.5V455.4M428.52 534.7V464.5M429.2 524.2V451.2M429.88 530.4V464.4M430.57 536.8V452.2M431.25 538.4V469.6M431.93 537.5V478.7M432.61 529.5V472.5M433.3 533.6V484.8M433.98 538.1V481.2M434.66 526.1V480.3M435.34 525.6V470.6M436.03 538.5V478.7M436.71 535V484M437.39 538.1V465.3M438.07 534.7V451.8M438.76 537.1V470.3M439.44 532.2V464.7M440.12 539.9V475.4M440.8 536.9V469.8M441.49 536.6V463.9M442.17 532.1V479.9M442.85 537.3V486.5M443.53 537.9V488.7M444.22 536.5V489.8M444.9 536.6V487.9M445.58 535.2V478.5M446.26 529.9V473.7M446.95 533.5V475.6M447.63 533.4V464M448.31 532.5V466.6M448.99 535.7V475.8M449.68 537.8V471.6M450.36 538.7V483.2M451.04 538.3V471.9M451.72 527.8V459.6M452.41 534.2V476.5M453.09 538V477.1M453.77 534.1V465.8M454.45 536.2V481.4M455.14 533.6V472.7M455.82 536.5V474.2M456.5 537.3V471.5M457.18 535.3V485.9M457.87 529.1V477.5M458.55 537.8V466.2M459.23 533.5V475M459.91 539V473.1M460.6 529V471.6M461.28 531V476.8M461.96 531.1V481.7M462.64 532.3V471.3M463.33 528.7V469.6M464.01 533.3V470.7M464.69 530.8V479.6M465.37 534.4V486.3M466.06 534.3V481.2M466.74 527.8V474.4M467.42 538.5V477.2M468.1 535.3V479.6M468.79 533.9V468.7M469.47 538.6V461.7M470.15 536.3V464.7M470.83 538V480.5M471.52 539.5V476.9M472.2 532V467.1M472.88 536.4V482.4M473.56 524.2V477M474.25 535.9V489.9M474.93 536.2V482.3M475.61 537.7V480.1M476.29 533.4V469.4M476.98 530.3V477.3M477.66 535.3V475.9M478.34 524.5V464.4M479.02 535.7V480.3M479.71 529.6V479.9M480.39 533.9V487.7M481.07 533.4V487.4M481.75 538.4V495.6M482.44 538.4V491.5M483.12 530.2V482.7M483.8 532V483.2M484.48 536.9V478.4M485.17 536.8V467.3M485.85 536.4V482.6M486.53 536.7V474.5M487.21 534.4V485.1M487.9 534.2V480M488.58 534.5V488.6M489.26 536.2V492.5M489.94 523.6V483.9M490.63 533.8V479.2M491.31 538.3V475.3M491.99 538.4V487.3M492.67 532V480M493.36 535.9V492.3M494.04 532.3V487.1M494.72 533.4V479.1M495.4 534.6V468.1M496.09 538.4V483.2M496.77 536.5V479.4M497.45 534.1V486.9M498.13 528.8V477.3M498.82 531.9V478.7M499.5 538V491.6M500.18 534.7V491.4M500.86 537.9V482.6M501.55 538.2V482.1M502.23 530.1V471.7M502.91 531.7V479.9M503.59 537.7V484.6M504.28 535.5V485.7M504.96 534.9V489.9M505.64 534.3V490.3M506.32 535.5V481.4M507.01 536.7V485.9M507.69 537.1V476.2M508.37 536.6V489.4M509.05 533.2V482.6M509.74 535.2V485M510.42 535.4V475.1M511.1 530.7V484.9M511.78 535.9V474.9M512.47 534.6V487.1M513.15 533.6V477.5M513.83 534.2V479.9M514.51 533.6V484.5M515.2 537.2V484.7M515.88 536.4V481.6M516.56 538.3V492M517.24 534.1V488.1M517.93 532.9V492.4M518.61 532.2V483.8M519.29 537.5V486.9M519.97 533.9V488.8M520.66 535V471.7M521.34 538.9V470.2M522.02 535.1V476.3M522.7 539.5V488.5M523.39 537.9V492M524.07 532.8V486.4M524.75 534.8V497.6M525.43 532.1V487.6M526.12 531.1V478.2M526.8 533.1V491.2M527.48 535.5V484.8M528.16 534.3V493.3M528.85 534.1V489.5M529.53 532.6V485.6M530.21 533.7V475.8M530.89 532.2V482.9M531.58 533.7V494.9M532.26 532.1V488.4M532.94 535.2V483.1M533.62 532.1V472.9M534.31 531.7V483.3M534.99 534.1V473.1M535.67 535.4V487.2M536.35 534.4V485.5M537.04 532.2V486.6M537.72 529.7V489.2M538.4 534.2V472.3M539.08 537.1V469.3M539.77 537.4V476.9M540.45 534.7V484.8M541.13 536.9V483.5M541.81 533.6V495.4M542.5 532.8V489.1M543.18 533.1V495.8M543.86 537.8V487.8M544.54 535V490.2M545.23 535V475.7M545.91 538.1V471M546.59 536.9V478.1M547.27 533.9V477.3M547.96 534.1V483.2M548.64 536.7V476.6M549.32 536V477.9M550 535.6V490.9M550.69 534.2V489.7M551.37 536.3V491.2M552.05 538.5V486.8M552.73 536.7V489.1M553.42 533.4V497.4M554.1 536.3V489.7M554.78 531V483.6M555.46 535.3V495.4M556.15 532.1V494.8M556.83 537.3V500.6M557.51 538.7V489.5M558.19 533V480.5M558.88 535.3V490.3M559.56 537.4V493.8M560.24 530.1V486.4M560.92 531.7V495.1M561.61 538V492.7M562.29 536.2V484.2M562.97 538.8V496M563.65 536.2V504.5M564.34 538.3V499.6M565.02 535.5V492.4M565.7 532.9V500M566.38 536.9V497.9M567.07 534.7V491.1M567.75 533.3V490M568.43 537.7V498.7M569.11 533.4V500.8M569.8 536.4V504.9M570.48 537.1V503.2M571.16 536.4V502.1M571.84 533.5V495.3M572.53 536.6V495.3M573.21 535.8V494.9M573.89 536.8V494.7M574.57 536.8V504.2M575.26 531.1V500.8M575.94 539.7V489.6M576.62 537V483.8M577.3 537V493M577.99 535.7V492.3M578.67 537.5V484.3M579.35 537V495.5M580.03 535.5V498M580.72 537.6V492.9M581.4 534.6V488M582.08 533.9V498.9M582.76 536.4V498.5M583.45 535.5V500.9M584.13 537.3V498.5M584.81 537.4V507.3M585.49 538V506.4M586.18 539V502.5M586.86 537.7V495.7M587.54 536.1V500M588.22 534V503.7M588.91 536.9V498.9M589.59 531.9V491.6M590.27 537.2V492.4M590.95 539.4V496.4M591.64 536.1V505.6M592.32 535.1V500.3M593 539.5V508.7M593.68 537.1V502.1M594.37 537V495.3M595.05 534V504.7M595.73 535.2V500M596.41 535.7V492.8M597.1 532.7V492.5M597.78 533.7V502.5M598.46 535.7V497.1M599.14 533.7V493.3M599.83 535.9V503.1M600.51 535V501.9M601.19 536.9V503.3M601.87 539.5V496.7M602.56 535.2V500.1M603.24 537.3V492.9M603.92 537.3V499.2M604.6 536.4V491.9M605.29 539.1V502M605.97 532.7V499M606.65 535.1V507.6M607.33 536.8V510.9M608.02 534.3V511.9M608.7 537.2V509.4M609.38 538.3V504.1M610.06 536.8V508.4M610.75 538.2V502.7M611.43 533.3V499.9M612.11 537.6V493.6M612.79 535.3V495.9M613.48 537.2V503.4M614.16 538.2V496.8M614.84 539.3V505.9M615.52 538.6V505.1M616.21 536.4V499.1M616.89 537.3V496.3M617.57 534.8V500.3M618.25 535.8V496M618.94 537.9V505.2M619.62 537.7V510.1M620.3 536.3V509.5M620.98 536.2V504M621.67 538.2V501.9M622.35 538.2V501.8M623.03 536.7V506.6M623.71 537.8V506.6M624.4 539.6V507M625.08 537.3V507.4M625.76 537.2V510.1M626.44 537.3V515.8M627.13 538.3V508M627.81 539.4V502.3M628.49 535.4V504.5M629.17 539.4V509.7M629.86 533.9V508.6M630.54 538.8V513.6M631.22 537.6V504.8M631.9 534.4V498.4M632.59 539.3V507.2M633.27 534.5V514.1M633.95 535.2V510M634.63 535.9V505.6M635.32 538.1V510.4M636 534.6V510.1M636.68 534.1V504.7M637.36 538.4V508.9M638.05 537.4V505.9M638.73 537.5V511.5M639.41 539V508.2M640.09 538.2V511.1M640.78 537.9V509.8M641.46 538V507.5M642.14 539V507.9M642.82 536.5V513.6M643.51 538.8V511.1M644.19 538.1V513.8M644.87 538.2V513.8M645.55 538.1V514.2M646.24 536.5V512.6M646.92 537.3V507.7M647.6 536.1V510.3M648.28 537.4V509.9M648.97 537.5V515.8M649.65 534.8V511.5M650.33 538.5V511.4M651.01 538V516.5M651.7 536.8V514.4M652.38 535V516.6M653.06 537.2V516.5M653.74 536.4V510.4M654.43 538.3V505.1M655.11 539.5V511.3M655.79 537.9V506.2M656.47 538.3V512.6M657.16 535.1V510.4M657.84 537.2V512.6M658.52 539.4V513.8M659.2 534.5V509.1M659.89 537.7V515.6M660.57 537.1V512M661.25 535.8V510.5M661.93 538.8V511.9M662.62 537.8V507.7M663.3 536.2V513.8M663.98 538.7V519.2M664.66 538.1V518.3M665.35 539.7V519M666.03 539V516.1M666.71 538.4V515.1M667.39 538.6V514.6M668.08 537.8V517.9M668.76 539V514M669.44 538V519.4M670.12 536.3V517.7M670.81 537.3V513.7M671.49 538.5V513.4M672.17 539V511.9M672.85 538.2V517.8M673.54 538.9V518.6M674.22 539.2V518.6M674.9 536.8V518.6M675.58 539.1V520.4M676.27 538V518.7M676.95 538.2V519.2M677.63 538.3V516.6M678.31 538.6V512.5M679 538.5V518.2M679.68 539.3V516.7M680.36 539.3V513.8M681.04 538.4V517.1M681.73 538.4V522M682.41 536.1V519M683.09 537.3V517.2M683.77 537.4V514.2M684.46 539.2V512.5M685.14 539V518.3M685.82 537.4V520.1M686.5 537.3V521M687.19 536.9V517.6M687.87 538.3V515.5M688.55 536.4V520.7M689.23 538.4V522M689.92 537.8V519.9M690.6 538.1V516.3M691.28 539.2V521.2M691.96 538.5V518.2M692.65 538.4V519.6M693.33 538.2V518.2M694.01 539.5V522.8M694.69 537.8V525.1M695.38 538.3V522.9M696.06 537.5V519.8M696.74 536.6V519.6M697.42 539.4V516M698.11 537.2V521M698.79 538.2V521.1M699.47 538.7V520.3M700.15 539.4V521.8M700.84 536.8V518.5M701.52 539.2V523M702.2 539V522M702.88 538.5V522.2M703.57 537.7V526M704.25 537.4V525.4M704.93 539V522.8M705.61 535.9V521.6M706.3 536.9V524.3M706.98 538.9V524.3M707.66 539.1V522.4M708.34 537.5V519.2M709.03 539.3V522.8M709.71 539.3V524M710.39 538.4V522.4M711.07 539.8V521.3M711.76 539.1V524M712.44 538.8V523.1M713.12 539.4V525.6M713.8 539.2V522.5M714.49 538.3V519.3M715.17 538.3V523.7M715.85 539.5V522.3M716.53 538.1V524M717.22 537.8V525.3M717.9 538.8V526.1M718.58 539V523.6M719.26 539.4V523.8M719.95 538.1V526.1M720.63 539.7V529M721.31 538.2V526.6M721.99 538.8V524.2M722.68 539V525.6M723.36 538V525.8M724.04 539.9V526.6M724.72 538.3V524.2M725.41 539.5V527.5M726.09 538.4V525.9M726.77 539.1V525.1M727.45 537.9V522.5M728.14 539.7V526.1M728.82 539V525.3M729.5 536.4V522.7M730.18 539.9V526.2M730.87 538.8V523.8M731.55 538.8V527.2M732.23 539.4V528.5M732.91 538.3V526.5M733.6 537.5V528.8M734.28 539.1V526.8M734.96 539V529.3M735.64 539.6V527.4M736.33 539.8V528.3M737.01 538.7V528.9M737.69 539.4V527.6M738.37 539.8V527.3M739.06 539.1V529.9M739.74 539.4V530.9M740.42 538.6V530.4M741.1 537.8V528.1M741.79 539.6V525.5M742.47 538.4V524.1M743.15 539.3V526.5M743.83 539.2V527.4M744.52 539.6V525.1M745.2 538.7V528M745.88 538.2V527.6M746.56 539.3V528.5M747.25 539.4V527.9M747.93 538.8V529.6M748.61 538.5V528.1M749.29 538.9V526M749.98 538.3V527.9M750.66 539.5V528.5M751.34 539.4V530.1M752.02 539.4V529.5M752.71 539.3V527.9M753.39 539.2V525.7M754.07 539.6V528.7M754.75 538.9V529.2M755.44 539.2V528M756.12 539V528.5M756.8 537.8V530.9M757.48 539V531.2M758.17 538.1V530.3M758.85 539.3V528.6M759.53 539.9V530.2M760.21 539.2V528.4M760.9 539.3V530.8M761.58 538.6V529.2M762.26 539.5V529.2M762.94 538.5V530.1M763.63 539.8V529.9M764.31 538.9V531M764.99 539.2V531.4M765.67 539.7V531.4M766.36 538.5V528.6M767.04 539.3V526.5M767.72 539.9V529.4M768.4 539.7V529.7M769.09 537.1V528.5M769.77 538.8V526.4M770.45 538.8V529.3M771.13 539.7V529M771.82 539.5V528.8M772.5 539.1V529.5M773.18 538.3V528.7M773.86 539.4V526.7M774.55 539.5V526M775.23 538.7V526.7M775.91 538.6V526.9M776.59 538.9V530.1M777.28 539.2V529M777.96 538.9V530.7M778.64 538.2V529M779.32 539.5V531.3M780.01 539.8V530.2M780.69 540V529M781.37 539V531.3M782.05 539.4V531.7M782.74 539.3V530.8M783.42 539.3V530.6M784.1 538.6V528.9M784.78 538.6V530.2M785.47 539.4V528.5M786.15 539.6V530.6M786.83 538.8V529.5M787.51 539.4V530.5M788.2 538.8V529.7M788.88 539.8V530.6M789.56 539.6V531.1M790.24 539.7V529.5M790.93 538.8V530.6M791.61 539.2V530.5M792.29 539.8V528.8M792.97 538.6V528.9M793.66 539.5V531.2M794.34 539.5V532.3M795.02 538.7V530.9M795.7 539.7V532.1M796.39 538.9V530.6M797.07 539.3V529.5M797.75 539.4V531.7M798.43 538.5V530.9M799.12 539.6V529.3M799.8 538.3V528.5M800.48 539.7V530.9M801.16 538.1V530.8M801.85 538.6V529.1M802.53 538.9V530.4M803.21 538.9V530.9M803.89 539.7V529.2M804.58 539.9V531.5M805.26 539.2V531M805.94 539.1V532.1M806.62 539.2V530.7M807.31 539.4V532.2M807.99 539.5V532.2M808.67 538V530.8M809.35 539.9V531.2M810.04 539.4V530.8M810.72 539.1V531.5M811.4 540V530M812.08 538.7V532M812.77 539.1V530.9M813.45 539.1V530.1M814.13 538.9V528.3M814.81 539.3V530.7M815.5 539.2V531.6M816.18 539V531.2M816.86 539V530.9M817.54 539.5V532.5M818.23 538.8V531.2M818.91 538.8V532.3M819.59 538.4V530.9M820.27 539.1V531.5M820.96 538.2V530M821.64 539.8V531.7M822.32 539V530.2M823 539.1V532.2M823.69 539.1V530.7M824.37 539.3V529M825.05 539.5V531.2M825.73 538.7V531.3M826.42 539.6V531.3M827.1 539.5V531.7M827.78 539.6V531.9M828.46 539.6V531.4M829.15 539.4V530.9M829.83 539V528.3M830.51 539.5V528.4M831.19 538.8V529.1M831.88 539.3V531.9M832.56 539.6V530.4M833.24 539.7V532.5M833.92 539.5V533.1M834.61 539.5V532.6M835.29 538.7V532.7M835.97 538.9V531.1M836.65 539.3V529.5M837.34 538.9V531.7M838.02 539.9V533.2M838.7 538.5V532M839.38 538.4V533.1M840.07 539.5V531.8M840.75 539.3V531M841.43 539.3V529.3M842.11 539.3V531.6M842.8 539.3V531.8M843.48 538.7V530.4M844.16 539V529.8M844.84 539.2V530.2M845.53 539.6V531.7M846.21 539.1V532.6M846.89 539.5V533.1M847.57 539.5V532M848.26 539.7V531.9M848.94 538.4V532.8M849.62 539.6V532.3M850.3 539.4V531.5M850.99 539.6V532.8M851.67 539.1V532.7M852.35 539.8V531.4M853.03 538.7V530.9M853.72 539.2V532.8M854.4 538.9V531.1M855.08 538.2V529.5M855.76 538.9V531.7M856.45 539.2V531.1M857.13 539.6V533M857.81 539.4V533.4M858.49 539.5V533.2M859.18 539.4V532.9M859.86 539.8V533.6M860.54 539.4V532.1M861.22 539.4V530.7M861.91 539.4V530.5M862.59 539.6V531.6M863.27 539.2V533.3M863.95 539.1V532.2M864.64 539V530.8M865.32 539.8V532.5M866 539.5V531.6M866.68 539.5V532M867.37 540V530.7M868.05 539.7V531.6M868.73 539.7V532.3M869.41 539.1V532.1M870.1 539V531.7M870.78 539V533.4M871.46 539.7V531.8M872.14 539.5V530.3M872.83 539V532.3M873.51 539.5V531M874.19 539.7V530.6M874.87 539.4V531.8M875.56 539.3V531.9M876.24 539.3V533.6M876.92 538.5V531.5M877.6 539.3V529.9M878.29 539.6V532.1M878.97 539.9V532.6M879.65 539.3V531.3M880.33 539.6V532M881.02 539.2V530.6M881.7 539.2V532.5M882.38 539.3V532.7M883.06 539.2V531.4M883.75 539.9V532.4M884.43 538.7V532.7M885.11 538.9V531.4M885.79 539.4V533.2M886.48 539.8V533.7M887.16 539.3V532.6M887.84 539.2V533.7M888.52 539.3V533.4M889.21 539.3V531.5M889.89 539.4V530.2M890.57 539.4V532.1M891.25 539.4V533.7M891.94 539.9V532.5M892.62 539.4V532.5M893.3 539.2V533.5M893.98 538.6V533.6M894.67 539.5V532.5M895.35 539.4V532.4M896.03 539.6V531.1M896.71 538.8V532.9M897.4 538.9V532M898.08 539.5V533.2M898.76 539V532.2M899.44 539V533.4M900.13 539.8V532.6M900.81 539.2V531.3M901.49 538.9V531.5M902.17 539.7V533.3M902.86 539.5V534.3M903.54 538.7V533.3M904.22 539.5V534M904.9 539.7V532.9M905.59 539.3V532M906.27 539.3V532.5M906.95 539.8V531.8M907.63 539.6V533.4M908.32 539.1V532.3M909 539.4V533.4M909.68 539.7V533.8M910.36 539.2V534.3M911.05 539.2V532.5M911.73 539.9V531.2M912.41 539.8V532.6M913.09 539.5V533.8M913.78 539.5V533.8M914.46 539.4V534.1M915.14 539.6V533.5M915.82 539.2V533.2M916.51 539.3V531.9M917.19 539.2V533.6M917.87 539.5V532.8M918.55 539.1V533.8M919.24 539.5V533.5M919.92 539.8V534M920.6 539.1V532.6M921.28 539.4V531.3M921.97 539.7V533.1M922.65 538.8V533.7M923.33 539.5V534.5M924.01 539.4V534.2M924.7 538.8V533.5M925.38 538.7V533.3M926.06 538.7V533.3M926.74 538.9V532.7M927.43 539.9V533.8M928.11 539.8V532.7M928.79 539.4V532.5M929.47 539.3V531.3M930.16 539.3V533M930.84 539.8V532.2M931.52 539.3V532.2M932.2 539.4V532.1M932.89 539.2V533.8M933.57 539.2V533.7M934.25 539.4V534.6M934.93 538.8V532.8M935.62 539.2V531.5M936.3 539.8V533.3M936.98 539.4V533.7M937.66 539.8V533.9M938.35 539.7V532.8M939.03 539.5V533.7M939.71 539.7V534.1M940.39 539.7V533.8M941.08 538.8V534.3M941.76 539.9V533.3M942.44 539.5V533.4M943.12 539.7V534.1M943.81 538.9V532.2M944.49 539.4V531.5M945.17 538.8V531.1M945.85 539V533M946.54 538.7V533.6M947.22 539.2V533.5M947.9 539.7V533.4M948.58 538.8V533M949.27 539.1V534.5M949.95 539.8V533.7M950.63 539.3V534M951.31 539.7V533.8M952 539.5V532.8M952.68 539.1V534M953.36 539V534.3M954.04 539.6V534.3M954.73 539.4V533.3M955.41 539.2V532.3M956.09 539.6V533.8M956.77 539.4V531.8M957.46 538.5V531.2M958.14 539.4V532.3M958.82 539.1V532.9M959.5 539.7V534.4M960.19 539.2V533.4M960.87 539.3V532.2M961.55 538.6V533.5M962.23 539.2V532.3M962.92 539.2V533.9M963.6 539.2V533.9M964.28 539.7V534M964.96 539.6V534.3M965.65 539.6V534.1M966.33 539.6V533.8M967.01 539.8V532.7M967.69 539.5V534.3M968.38 539.9V534.4M969.06 539.5V533.5M969.74 539.3V532.3M970.42 539.6V533.6M971.11 539.5V533.9M971.79 539.7V532.8M972.47 539.6V534.3M973.15 539.3V533.9M973.84 539.6V532.9M974.52 539.6V534.3M975.2 539.5V533.8M975.88 539.7V534.8M976.57 539.6V533.9M977.25 539.1V532.8M977.93 539.9V534.3M978.61 539.9V535M979.3 539.6V535.2M979.98 539.9V534.8M980.66 539.5V534.6M981.34 539.9V533.6M982.03 540V534.2M982.71 538.8V533.2M983.39 539.8V533M984.07 539.4V534.5M984.76 539.5V534M985.44 539.5V533.2M986.12 539.7V532M986.8 539.2V533.7M987.49 539.1V533.5M988.17 539.3V534.3M988.85 539.4V534.9M989.53 539.6V534M990.22 539.7V533.4M990.9 539.5V532.2M991.58 539.7V533.8M992.26 539.3V532.7M992.95 539.7V533.5M993.63 539.1V534.5M994.31 539V533.5M994.99 539.5V533.9M995.68 539.9V534.5M996.36 539.7V533.5M997.04 539.7V533.5M997.72 538.8V534M998.41 539.4V533.6M999.09 539.2V534.1M999.77 539V535.3M1000.45 539.8V534.8M1001.14 539.5V533.9M1001.82 539.4V534.5M1002.5 539.5V533.9M1003.18 539.2V534.1M1003.87 539.8V533.1M1004.55 539.3V532.4M1005.23 539.9V533.2M1005.91 539.7V532.2M1006.6 539.7V533.7M1007.28 539V535.2M1007.96 539.9V534.3M1008.64 539.1V534.4M1009.33 539.4V534.8M1010.01 539.7V534.7M1010.69 539.3V534.9M1011.37 539.8V534.7M1012.06 539.7V533.8M1012.74 539.8V533.6M1013.42 539.7V535M1014.1 539.5V534.4M1014.79 539.4V533.4M1015.47 539.5V534.8M1016.15 539.5V534M1016.83 538.8V533.9M1017.52 539.5V532.8M1018.2 539.4V534.3M1018.88 539.3V534.9M1019.56 539.2V534.6M1020.25 539.5V533.7M1020.93 539.8V535M1021.61 539.8V534.5M1022.29 539.6V532.7M1022.98 539.4V532.4M1023.66 540V533.2M1024.34 539.7V534M1025.02 539.4V533.9M1025.71 539.4V533.9M1026.39 539.1V535.2M1027.07 539.8V533.7M1027.75 539.6V532.5M1028.44 539.7V534.1M1029.12 539.8V534.5M1029.8 539.1V533.5M1030.48 539.6V534.2M1031.17 539.9V533.1M1031.85 539.3V532.6M1032.53 539.6V533.6M1033.21 539.6V534.4M1033.9 539.6V535.4M1034.58 539.2V535.1M1035.26 539.3V534.2M1035.94 539.4V533.5M1036.63 539.8V534.9M1037.31 539.5V533.5M1037.99 539.5V532.7M1038.67 539.5V534M1039.36 539.5V535.7M1040.04 539.6V534.7M1040.72 539.7V533.7M1041.4 539.5V533.9M1042.09 539.7V533.6M1042.77 539.1V534.9M1043.45 539.6V534.7M1044.13 539.3V533.7M1044.82 539.7V533.9M1045.5 539V534.6M1046.18 539.2V535.7M1046.86 539.3V535.5M1047.55 539.7V535M1048.23 539V535.5M1048.91 539.7V534.7M1049.59 539.9V533.7M1050.28 539.2V533.5M1050.96 539.7V534.9M1051.64 539.5V534M1052.32 539.6V535.1M1053.01 539.7V534.2M1053.69 539.8V534.5M1054.37 539.5V534M1055.05 539.3V535.2M1055.74 539.3V535.1M1056.42 539.6V534.2M1057.1 539.7V535.4M1057.78 539.2V534.4M1058.47 539.5V533.4M1059.15 539.6V534.8M1059.83 539.7V534.8M1060.51 539.5V534.1M1061.2 539.8V533.4M1061.88 539.6V533M1062.56 539.5V534.2M1063.24 539.8V535.7M1063.93 539.7V534.9M1064.61 539.5V534.4M1065.29 539.3V534.4M1065.97 540V533.4M1066.66 539.3V533.9M1067.34 539.6V534.2M1068.02 539.3V535.4M1068.7 539.2V535.5M1069.39 539.3V535M1070.07 539.4V535.6M1070.75 538.9V534.8M1071.43 539.8V534.8M1072.12 539.1V534.9M1072.8 539.3V534.1M1073.48 539.8V533.1M1074.16 539.8V534.5M1074.85 539V535.1M1075.53 539.7V533.4M1076.21 539.5V532.7" stroke="#00ff00" stroke-width="0.6825"/>
<path d="M182.99 47V268.7" stroke="#d6cc00" stroke-width="0.85" stroke-dasharray="3.3 1.6"/>
<path d="M324.04 47V268.7" stroke="#d6cc00" stroke-width="0.85" stroke-dasharray="3.3 1.6"/>
<path d="M606.13 47V268.7" stroke="#d6cc00" stroke-width="0.85" stroke-dasharray="3.3 1.6"/>
<path d="M747.17 47V268.7" stroke="#d6cc00" stroke-width="0.85" stroke-dasharray="3.3 1.6"/>
<path d="M888.22 47V268.7" stroke="#d6cc00" stroke-width="0.85" stroke-dasharray="3.3 1.6"/>
<path d="M1029.27 47V268.7" stroke="#d6cc00" stroke-width="0.85" stroke-dasharray="3.3 1.6"/>
<path d="M465.33 47V268.7" stroke="#e60000" stroke-width="1" stroke-dasharray="3.3 1.6"/>
<path d="M463.83 268L465.53 266.3L467.23 268L465.53 269.7Z" fill="#e60000"/>
<path d="M322.9 267.9L324.2 266.6L325.5 267.9L324.2 269.2Z" fill="#e60000"/>
<path d="M605.16 267.9L606.46 266.6L607.76 267.9L606.46 269.2Z" fill="#e60000"/>
<path d="M430 260.3L465.33 267.8" stroke="#c8c8c8" stroke-width="0.7"/>
<path d="M65.2 46.5H1076.3" stroke="#a8a8a8"/><path d="M65.2 269.65H1076.3" stroke="#a8a8a8" stroke-width="0.9"/>
<path d="M68.5 46.5V275.65" stroke="#a8a8a8"/><path d="M1076.3 46.5V276.05" stroke="#858585"/>
<path d="M65.2 238.8H68.5M65.2 208.4H68.5M65.2 178H68.5M65.2 147.6H68.5M65.2 117.2H68.5M65.2 86.8H68.5M65.2 56.4H68.5M65.2 46.5H68.5" stroke="#aab4d2"/>
<path d="M118.89 269.65V275.85M169.28 269.65V275.85M219.67 269.65V275.85M270.06 269.65V275.85M320.46 269.65V275.85M370.85 269.65V275.85M421.24 269.65V275.85M471.63 269.65V275.85M522.02 269.65V275.85M572.41 269.65V275.85M622.8 269.65V275.85M673.19 269.65V275.85M723.58 269.65V275.85M773.97 269.65V275.85M824.37 269.65V275.85M874.76 269.65V275.85M925.15 269.65V275.85M975.54 269.65V275.85" stroke="#a8a8a8"/>
<path d="M65.2 317.6H1076.3" stroke="#a8a8a8"/><path d="M65.2 540.3H1076.3" stroke="#a8a8a8" stroke-width="0.9"/>
<path d="M68.5 317.6V546.3" stroke="#a8a8a8"/><path d="M1076.3 317.6V546.7" stroke="#858585"/>
<path d="M65.2 503.85H68.5M65.2 467.4H68.5M65.2 430.95H68.5M65.2 394.51H68.5M65.2 358.06H68.5M65.2 321.61H68.5M65.2 317.6H68.5" stroke="#aab4d2"/>
<path d="M128.34 540.3V546.5M188.27 540.3V546.5M248.21 540.3V546.5M308.14 540.3V546.5M368.08 540.3V546.5M428.01 540.3V546.5M487.95 540.3V546.5M547.88 540.3V546.5M607.82 540.3V546.5M667.75 540.3V546.5M727.69 540.3V546.5M787.63 540.3V546.5M847.56 540.3V546.5M907.5 540.3V546.5M967.43 540.3V546.5" stroke="#a8a8a8"/>
<path d="M68.5 318.1V539.8" stroke="#e60000" stroke-width="1" stroke-dasharray="3.3 1.6"/>
<path d="M67.6 539.4L69.1 537.9L70.6 539.4L69.1 540.9Z" fill="#e60000"/>
<path d="M69 539.5L82.5 527" stroke="#b4b4b4" stroke-width="0.7"/>
<path d="M244.1 34.2L245.9 31.2L247.7 34.2Z" stroke="#a9afc4" stroke-width="0.7" fill="none"/>
<path d="M426.4 252.2L428.6 248L430.8 252.2Z" stroke="#dcdc00" stroke-width="0.9" fill="none"/>
<rect x="0.5" y="45.8" width="20.6" height="20.4" fill="#1e3a66" stroke="#6a8dd8"/><path d="M0.5 45.3V66.7" stroke="#86a6ea"/>
<path d="M3.5 49.8V64H19" stroke="#1f7ae6" fill="none"/><path d="M3.5 48.5l1.6 3h-3.2z" fill="#1f7ae6"/><path d="M11.5 53.3V64" stroke="#e60000" stroke-width="1.1"/><path d="M11.5 53.6l1.6 2.2l-1.6 1.8l-1.6-1.8z" fill="#e60000"/>
<ellipse cx="6.3" cy="84.8" rx="4" ry="1.4" fill="#e60000"/><path d="M6.3 70V85.2" stroke="#3f8cee" stroke-width="1.4"/><path d="M7 70.4C10 69.2 12.5 73.2 18 70.8V78.2C13 80.2 10.5 76 7 77.4Z" fill="#7db9f7"/>
<path d="M7.6 93.1H17.2V99.7H8.6L6.2 100.7L7.6 98.7Z" fill="#7db9f7" stroke="#3a86ea" stroke-width="0.7"/><path d="M9 95.1H14M9 97H13M15 94.7V97.5" stroke="#b7d9fb" stroke-width="0.8"/><path d="M2.8 106.7L3.6 101.7H5L5.8 104.9Q8 106.1 10 106.1Q12.5 104.5 14 104.7Q16 106.1 19 106.7Z" fill="#3f8cee"/><rect x="3.3" y="100.2" width="1.9" height="1.4" fill="#e23030"/>
<g transform="rotate(0 10.6 120.4)"><path d="M10.6 113.9l3 3.2h-1.9v1.7h-2.2v-1.7h-1.9z" fill="#2c7fe6"/><path d="M10.6 115.1V118.4" stroke="#c4e0ff" stroke-width="1.3"/></g><g transform="rotate(90 10.6 120.4)"><path d="M10.6 113.9l3 3.2h-1.9v1.7h-2.2v-1.7h-1.9z" fill="#2c7fe6"/><path d="M10.6 115.1V118.4" stroke="#c4e0ff" stroke-width="1.3"/></g><g transform="rotate(180 10.6 120.4)"><path d="M10.6 113.9l3 3.2h-1.9v1.7h-2.2v-1.7h-1.9z" fill="#2c7fe6"/><path d="M10.6 115.1V118.4" stroke="#c4e0ff" stroke-width="1.3"/></g><g transform="rotate(270 10.6 120.4)"><path d="M10.6 113.9l3 3.2h-1.9v1.7h-2.2v-1.7h-1.9z" fill="#2c7fe6"/><path d="M10.6 115.1V118.4" stroke="#c4e0ff" stroke-width="1.3"/></g><circle cx="8.2" cy="118" r="0.75" fill="#0c1122"/><circle cx="13" cy="118" r="0.75" fill="#0c1122"/><circle cx="8.2" cy="122.8" r="0.75" fill="#0c1122"/><circle cx="13" cy="122.8" r="0.75" fill="#0c1122"/><circle cx="10.6" cy="120.4" r="1.35" fill="#e60000"/>
<rect x="0.5" y="316.9" width="20.6" height="20.4" fill="#1e3a66" stroke="#6a8dd8"/><path d="M0.5 316.4V337.8" stroke="#86a6ea"/>
<path d="M3.5 320.9V335.1H19" stroke="#1f7ae6" fill="none"/><path d="M3.5 319.6l1.6 3h-3.2z" fill="#1f7ae6"/><path d="M11.5 324.4V335.1" stroke="#e60000" stroke-width="1.1"/><path d="M11.5 324.7l1.6 2.2l-1.6 1.8l-1.6-1.8z" fill="#e60000"/>
<path d="M3.5 342.5V356.3H19" stroke="#1f7ae6" fill="none"/><path d="M3.5 341l1.6 3h-3.2z" fill="#1f7ae6"/><path d="M7.5 345.5V356.3" stroke="#e60000" stroke-width="1.1"/><path d="M7.5 346.3l1.7 2.4l-1.7 1.6l-1.7-1.6z" fill="#e60000"/><path d="M11.5 345.5V356.3" stroke="#1f7ae6" stroke-width="1.1"/><path d="M11.5 346.3l1.7 2.4l-1.7 1.6l-1.7-1.6z" fill="#1f7ae6"/><path d="M15.5 345.5V356.3" stroke="#1f7ae6" stroke-width="1.1"/><path d="M15.5 346.3l1.7 2.4l-1.7 1.6l-1.7-1.6z" fill="#1f7ae6"/>
<path d="M3.5 364.2V378H19" stroke="#1f7ae6" fill="none"/><path d="M3.5 362.7l1.6 3h-3.2z" fill="#1f7ae6"/><path d="M7.5 366.7V378" stroke="#1f7ae6" stroke-width="1.1"/><path d="M7.5 367.5l1.7 2.4l-1.7 1.6l-1.7-1.6z" fill="#1f7ae6"/><path d="M11.5 366.7V378" stroke="#e60000" stroke-width="1.1"/><path d="M11.5 367.5l1.7 2.4l-1.7 1.6l-1.7-1.6z" fill="#e60000"/><path d="M15.5 366.7V378" stroke="#1f7ae6" stroke-width="1.1"/><path d="M15.5 367.5l1.7 2.4l-1.7 1.6l-1.7-1.6z" fill="#1f7ae6"/>
<ellipse cx="6.3" cy="399.4" rx="4" ry="1.4" fill="#e60000"/><path d="M6.3 384.6V399.8" stroke="#3f8cee" stroke-width="1.4"/><path d="M7 385C10 383.8 12.5 387.8 18 385.4V392.8C13 394.8 10.5 390.6 7 392Z" fill="#7db9f7"/>
<path d="M7.6 407.2H17.2V413.8H8.6L6.2 414.8L7.6 412.8Z" fill="#7db9f7" stroke="#3a86ea" stroke-width="0.7"/><path d="M9 409.2H14M9 411.1H13M15 408.8V411.6" stroke="#b7d9fb" stroke-width="0.8"/><path d="M2.8 420.8L3.6 415.8H5L5.8 419Q8 420.2 10 420.2Q12.5 418.6 14 418.8Q16 420.2 19 420.8Z" fill="#3f8cee"/><rect x="3.3" y="414.3" width="1.9" height="1.4" fill="#e23030"/>
<g transform="rotate(0 10.6 434.5)"><path d="M10.6 428l3 3.2h-1.9v1.7h-2.2v-1.7h-1.9z" fill="#2c7fe6"/><path d="M10.6 429.2V432.5" stroke="#c4e0ff" stroke-width="1.3"/></g><g transform="rotate(90 10.6 434.5)"><path d="M10.6 428l3 3.2h-1.9v1.7h-2.2v-1.7h-1.9z" fill="#2c7fe6"/><path d="M10.6 429.2V432.5" stroke="#c4e0ff" stroke-width="1.3"/></g><g transform="rotate(180 10.6 434.5)"><path d="M10.6 428l3 3.2h-1.9v1.7h-2.2v-1.7h-1.9z" fill="#2c7fe6"/><path d="M10.6 429.2V432.5" stroke="#c4e0ff" stroke-width="1.3"/></g><g transform="rotate(270 10.6 434.5)"><path d="M10.6 428l3 3.2h-1.9v1.7h-2.2v-1.7h-1.9z" fill="#2c7fe6"/><path d="M10.6 429.2V432.5" stroke="#c4e0ff" stroke-width="1.3"/></g><circle cx="8.2" cy="432.1" r="0.75" fill="#0c1122"/><circle cx="13" cy="432.1" r="0.75" fill="#0c1122"/><circle cx="8.2" cy="436.9" r="0.75" fill="#0c1122"/><circle cx="13" cy="436.9" r="0.75" fill="#0c1122"/><circle cx="10.6" cy="434.5" r="1.35" fill="#e60000"/>
<path d="M1064.4 30.4L1059.7 25.7M1063.7 25.7H1059.7V29.7" stroke="#c4c7d0" stroke-width="1.1" fill="none"/><path d="M1067.6 30.4L1072.3 25.7M1068.3 25.7H1072.3V29.7" stroke="#c4c7d0" stroke-width="1.1" fill="none"/><path d="M1064.4 33.6L1059.7 38.3M1063.7 38.3H1059.7V34.3" stroke="#c4c7d0" stroke-width="1.1" fill="none"/><path d="M1067.6 33.6L1072.3 38.3M1068.3 38.3H1072.3V34.3" stroke="#c4c7d0" stroke-width="1.1" fill="none"/>
<path d="M1064.4 301.5L1059.7 296.8M1063.7 296.8H1059.7V300.8" stroke="#c4c7d0" stroke-width="1.1" fill="none"/><path d="M1067.6 301.5L1072.3 296.8M1068.3 296.8H1072.3V300.8" stroke="#c4c7d0" stroke-width="1.1" fill="none"/><path d="M1064.4 304.7L1059.7 309.4M1063.7 309.4H1059.7V305.4" stroke="#c4c7d0" stroke-width="1.1" fill="none"/><path d="M1067.6 304.7L1072.3 309.4M1068.3 309.4H1072.3V305.4" stroke="#c4c7d0" stroke-width="1.1" fill="none"/>
</svg>
<div class="t cj" style="left:38.4px;top:7.3px;">科技股份有限公司</div>
<div class="t" style="left:106.7px;top:7.26px;color:#e9ebf2;font-size:10.8px;">/</div>
<div class="t cj" style="left:145px;top:7.3px;">轧钢厂在线监测项目</div>
<div class="t" style="left:221.5px;top:7.26px;color:#e9ebf2;font-size:10.8px;">/</div>
<div class="t cj" style="left:224.5px;top:7.3px;letter-spacing:-0.33px;">优特钢生产线</div>
<div class="t" style="left:276.3px;top:7.26px;color:#e9ebf2;font-size:10.8px;">/</div>
<div class="t cj" style="left:279.6px;top:7.3px;">优特钢粗轧</div>
<div class="t" style="left:321.6px;top:6.92px;color:#e9ebf2;font-size:8.3px;letter-spacing:0.574px;">6V</div>
<div class="t cj" style="left:332.6px;top:7.3px;">轧机</div>
<div class="t" style="left:350px;top:7.26px;color:#e9ebf2;font-size:10.8px;">/</div>
<div class="t cj" style="left:353.7px;top:7.3px;">齿轮箱</div>
<div class="t" style="left:379.4px;top:6.92px;color:#e9ebf2;font-size:8.3px;">2</div>
<div class="t cj" style="left:384.1px;top:7.3px;letter-spacing:-0.33px;">轴输入端</div>
<div class="t" style="left:418.5px;top:6.92px;color:#e9ebf2;font-size:8.3px;letter-spacing:0.374px;">5A</div>
<div class="t" style="left:428.9px;top:7.26px;color:#e9ebf2;font-size:10.8px;">/</div>
<div class="t" style="left:432.7px;top:6.92px;color:#e9ebf2;font-size:8.3px;letter-spacing:0.425px;">128k</div>
<div class="t cj" style="left:454.8px;top:7.3px;letter-spacing:-0.34px;">加速度波形</div>
<div class="t" style="left:497.6px;top:6.92px;color:#e9ebf2;font-size:8.3px;letter-spacing:0.424px;">(2-20000)</div>
<div class="t" style="left:553.7px;top:6.92px;color:#e9ebf2;font-size:8.3px;letter-spacing:0.406px;">2023/04/16</div>
<div class="t" style="left:603.6px;top:6.92px;color:#e9ebf2;font-size:8.3px;letter-spacing:0.036px;">15:30:00</div>
<div class="t cj" style="left:3.7px;top:28px;letter-spacing:-0.4px;">幅值谱</div>
<div class="t" style="left:42.2px;top:28.12px;color:#e9ebf2;font-size:8.3px;letter-spacing:0.575px;">5.029m/s^2</div>
<div class="t" style="left:103.9px;top:28.12px;color:#e9ebf2;font-size:8.3px;letter-spacing:-0.14px;">0RPM</div>
<div class="t" style="left:141.3px;top:28.12px;color:#e9ebf2;font-size:8.3px;letter-spacing:0.115px;">7875Hz</div>
<div class="t" style="left:180.9px;top:28.12px;color:#e9ebf2;font-size:8.3px;letter-spacing:0.645px;">0.005m/s^2</div>
<div class="t" style="left:248.5px;top:28.12px;color:#e9ebf2;font-size:8.3px;letter-spacing:0.29px;">f=2800.781Hz</div>
<div class="t cj" style="left:3.7px;top:299.1px;letter-spacing:-0.4px;">包络谱</div>
<div class="t" style="left:42.2px;top:299.22px;color:#e9ebf2;font-size:8.3px;letter-spacing:0.575px;">5.029m/s^2</div>
<div class="t" style="left:103.9px;top:299.22px;color:#e9ebf2;font-size:8.3px;letter-spacing:-0.14px;">0RPM</div>
<div class="t" style="left:141px;top:299.22px;color:#e9ebf2;font-size:8.3px;letter-spacing:0.013px;">0Hz</div>
<div class="t" style="left:166px;top:299.22px;color:#e9ebf2;font-size:8.3px;letter-spacing:0.917px;">0m/s^2</div>
<div class="t" style="left:41.83px;top:42.22px;color:#dcdcdc;font-size:8.3px;">3.651</div>
<div class="t" style="left:51.26px;top:232.62px;color:#dcdcdc;font-size:8.3px;">0.5</div>
<div class="t" style="left:58.18px;top:202.22px;color:#dcdcdc;font-size:8.3px;">1</div>
<div class="t" style="left:51.26px;top:171.82px;color:#dcdcdc;font-size:8.3px;">1.5</div>
<div class="t" style="left:58.18px;top:141.42px;color:#dcdcdc;font-size:8.3px;">2</div>
<div class="t" style="left:51.26px;top:111.02px;color:#dcdcdc;font-size:8.3px;">2.5</div>
<div class="t" style="left:58.18px;top:80.62px;color:#dcdcdc;font-size:8.3px;">3</div>
<div class="t" style="left:58.18px;top:263.02px;color:#dcdcdc;font-size:8.3px;">0</div>
<div class="t" style="left:61.12px;top:275.12px;color:#dcdcdc;font-size:8.3px;">0Hz</div>
<div class="t" style="left:109.66px;top:275.12px;color:#dcdcdc;font-size:8.3px;">1000</div>
<div class="t" style="left:160.05px;top:275.12px;color:#dcdcdc;font-size:8.3px;">2000</div>
<div class="t" style="left:210.44px;top:275.12px;color:#dcdcdc;font-size:8.3px;">3000</div>
<div class="t" style="left:260.83px;top:275.12px;color:#dcdcdc;font-size:8.3px;">4000</div>
<div class="t" style="left:311.22px;top:275.12px;color:#dcdcdc;font-size:8.3px;">5000</div>
<div class="t" style="left:361.61px;top:275.12px;color:#dcdcdc;font-size:8.3px;">6000</div>
<div class="t" style="left:412px;top:275.12px;color:#dcdcdc;font-size:8.3px;">7000</div>
<div class="t" style="left:462.4px;top:275.12px;color:#dcdcdc;font-size:8.3px;">8000</div>
<div class="t" style="left:512.79px;top:275.12px;color:#dcdcdc;font-size:8.3px;">9000</div>
<div class="t" style="left:560.87px;top:275.12px;color:#dcdcdc;font-size:8.3px;">10000</div>
<div class="t" style="left:611.26px;top:275.12px;color:#dcdcdc;font-size:8.3px;">11000</div>
<div class="t" style="left:661.65px;top:275.12px;color:#dcdcdc;font-size:8.3px;">12000</div>
<div class="t" style="left:712.04px;top:275.12px;color:#dcdcdc;font-size:8.3px;">13000</div>
<div class="t" style="left:762.43px;top:275.12px;color:#dcdcdc;font-size:8.3px;">14000</div>
<div class="t" style="left:812.82px;top:275.12px;color:#dcdcdc;font-size:8.3px;">15000</div>
<div class="t" style="left:863.22px;top:275.12px;color:#dcdcdc;font-size:8.3px;">16000</div>
<div class="t" style="left:913.61px;top:275.12px;color:#dcdcdc;font-size:8.3px;">17000</div>
<div class="t" style="left:964px;top:275.12px;color:#dcdcdc;font-size:8.3px;">18000</div>
<div class="t" style="left:1042.4px;top:275.12px;color:#dcdcdc;font-size:8.3px;letter-spacing:0.223px;">19999.60</div>
<div class="t" style="left:41.83px;top:313.32px;color:#dcdcdc;font-size:8.3px;">0.012</div>
<div class="t" style="left:42.03px;top:497.68px;color:#dcdcdc;font-size:8.3px;">0.002</div>
<div class="t" style="left:42.03px;top:461.23px;color:#dcdcdc;font-size:8.3px;">0.004</div>
<div class="t" style="left:42.03px;top:424.78px;color:#dcdcdc;font-size:8.3px;">0.006</div>
<div class="t" style="left:42.03px;top:388.33px;color:#dcdcdc;font-size:8.3px;">0.008</div>
<div class="t" style="left:46.65px;top:351.88px;color:#dcdcdc;font-size:8.3px;">0.01</div>
<div class="t" style="left:58.18px;top:534.12px;color:#dcdcdc;font-size:8.3px;">0</div>
<div class="t" style="left:61.12px;top:546.12px;color:#dcdcdc;font-size:8.3px;">0Hz</div>
<div class="t" style="left:121.41px;top:546.12px;color:#dcdcdc;font-size:8.3px;">500</div>
<div class="t" style="left:179.04px;top:546.12px;color:#dcdcdc;font-size:8.3px;">1000</div>
<div class="t" style="left:238.97px;top:546.12px;color:#dcdcdc;font-size:8.3px;">1500</div>
<div class="t" style="left:298.91px;top:546.12px;color:#dcdcdc;font-size:8.3px;">2000</div>
<div class="t" style="left:358.85px;top:546.12px;color:#dcdcdc;font-size:8.3px;">2500</div>
<div class="t" style="left:418.78px;top:546.12px;color:#dcdcdc;font-size:8.3px;">3000</div>
<div class="t" style="left:478.72px;top:546.12px;color:#dcdcdc;font-size:8.3px;">3500</div>
<div class="t" style="left:538.65px;top:546.12px;color:#dcdcdc;font-size:8.3px;">4000</div>
<div class="t" style="left:598.59px;top:546.12px;color:#dcdcdc;font-size:8.3px;">4500</div>
<div class="t" style="left:658.52px;top:546.12px;color:#dcdcdc;font-size:8.3px;">5000</div>
<div class="t" style="left:718.46px;top:546.12px;color:#dcdcdc;font-size:8.3px;">5500</div>
<div class="t" style="left:778.39px;top:546.12px;color:#dcdcdc;font-size:8.3px;">6000</div>
<div class="t" style="left:838.33px;top:546.12px;color:#dcdcdc;font-size:8.3px;">6500</div>
<div class="t" style="left:898.26px;top:546.12px;color:#dcdcdc;font-size:8.3px;">7000</div>
<div class="t" style="left:958.2px;top:546.12px;color:#dcdcdc;font-size:8.3px;">7500</div>
<div class="t" style="left:1041.6px;top:545.92px;color:#dcdcdc;font-size:8.3px;letter-spacing:0.248px;">8401.953</div>
<div class="t" style="left:425.9px;top:235.22px;color:#dcdc00;font-size:8.3px;letter-spacing:0.355px;">7875Hz,0.005m/s^2</div>
<div class="t" style="left:431.8px;top:244.82px;color:#dcdc00;font-size:8.3px;letter-spacing:0.34px;">f=2800.781Hz</div>
<div class="t" style="left:73px;top:512.52px;color:#dcdc00;font-size:8.3px;letter-spacing:0.324px;">0Hz,0m/s^2</div>
<div class="t" style="left:33.3px;top:157.8px;color:#dcdcdc;letter-spacing:0.556px;transform:translate(-50%,-50%) rotate(-90deg);padding-left:0.556px">[m/s^2]RMS</div>
<div class="t" style="left:33.3px;top:429px;color:#dcdcdc;letter-spacing:0.93px;transform:translate(-50%,-50%) rotate(-90deg);padding-left:0.93px">[m/s^2]</div>
</body></html>
